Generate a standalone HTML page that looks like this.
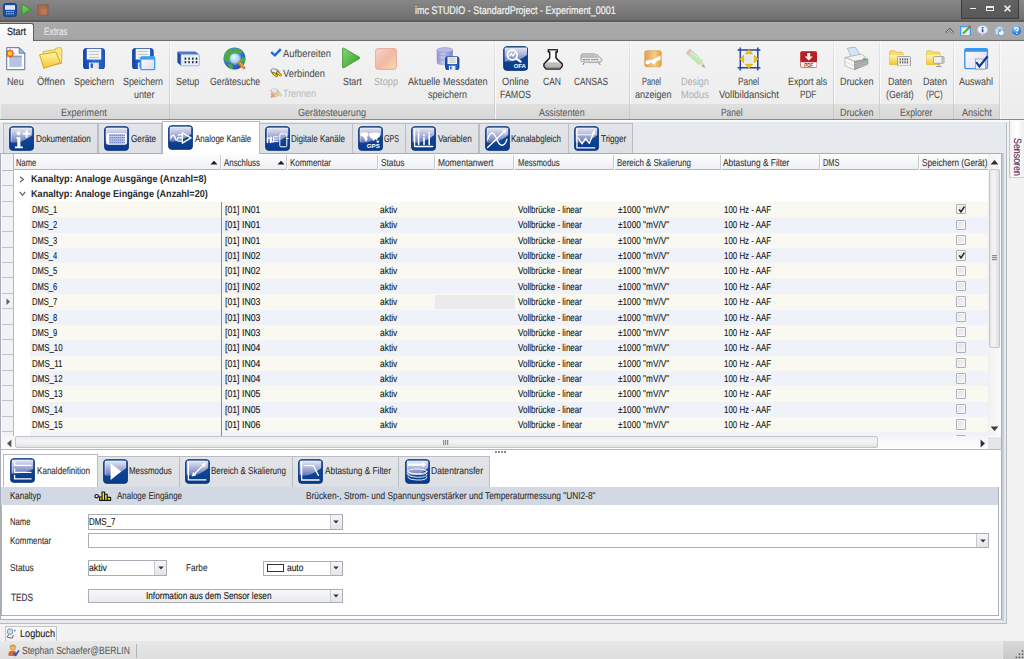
<!DOCTYPE html>
<html><head><meta charset="utf-8"><style>
*{margin:0;padding:0;box-sizing:border-box}
html,body{width:1024px;height:659px;overflow:hidden;background:#f2f2f2;font-family:"Liberation Sans",sans-serif;position:relative}
.a{position:absolute}
.t{position:absolute;white-space:nowrap;line-height:1;transform-origin:0 0}
</style></head><body>
<div class="a" style="left:0;top:0;width:1024px;height:20.3px;background:linear-gradient(#878787,#6f6f6f)"></div>
<div class="a" style="left:0;top:20.3px;width:1024px;height:1.3px;background:#5c5c5c"></div>
<svg class="a" style="left:3px;top:3px" width="14" height="14" viewBox="0 0 14 14"><rect x="0.5" y="0.5" width="13" height="13" rx="2" fill="#1a4ea6" stroke="#0d3a86" stroke-width="0.8"/><rect x="2" y="2.2" width="10" height="4.6" fill="#dde6f6"/><path d="M3 8.6H11M3 10.8H11" stroke="#c8d6f0" stroke-width="0.9" stroke-dasharray="1.2 0.5"/></svg><svg class="a" style="left:20.5px;top:3.3px" width="11.5" height="13" viewBox="0 0 11.5 13"><path d="M1.2 1.2L10.4 6.5L1.2 11.8Z" fill="url(#green)" stroke="#2f8a26" stroke-width="0.8"/></svg><svg class="a" style="left:36.5px;top:3.5px" width="12" height="12.5" viewBox="0 0 12 12.5"><rect x="0.6" y="0.6" width="10.8" height="11" rx="1.2" fill="#9a5a48" stroke="#7e6a60" stroke-width="0.6"/><rect x="1.6" y="1.6" width="8.8" height="9" fill="#b4704e" opacity="0.8"/><rect x="4" y="5" width="6" height="5.6" fill="#b88a5a" opacity="0.5"/></svg>
<div class="t" style="left:414.70px;top:6.00px;font-size:11px;font-weight:normal;text-rendering:geometricPrecision;color:#f4f4f4;transform:scaleX(0.8150);-webkit-text-stroke:0.2px #f4f4f4">imc STUDIO - StandardProject - Experiment_0001</div>
<div class="a" style="left:961.2px;top:-1px;width:58px;height:19.5px;background:linear-gradient(#636363,#575757);border:1px solid #3b3b3b"></div><div class="a" style="left:970px;top:7.8px;width:6.2px;height:1.6px;background:#ececec"></div><div class="a" style="left:986px;top:5.7px;width:8.1px;height:5.6px;border:1px solid #ececec;border-top-width:2px"></div><svg class="a" style="left:1003.5px;top:5px" width="7" height="7" viewBox="0 0 7 7"><path d="M0.6 0.6L6.4 6.4M6.4 0.6L0.6 6.4" stroke="#ececec" stroke-width="1.5"/></svg>
<div class="a" style="left:0;top:21.6px;width:1024px;height:18.4px;background:linear-gradient(#b2b2b2 0,#a9a9a9 8%,#a7a7a7 90%,#a0a0a0)"></div>
<div class="a" style="left:0;top:39.8px;width:1024px;height:1.3px;background:#6c6c6c"></div>
<div class="a" style="left:-1px;top:23.4px;width:34.6px;height:19px;background:linear-gradient(#fdfdfd,#f3f3f3);border:1px solid #5e5e5e;border-bottom:none;border-radius:0 2.5px 0 0"></div>
<div class="t" style="left:6.90px;top:27.00px;font-size:10.5px;font-weight:normal;text-rendering:geometricPrecision;color:#1e1e1e;transform:scaleX(0.8518);-webkit-text-stroke:0.2px #1e1e1e">Start</div>
<div class="t" style="left:43.75px;top:27.00px;font-size:10.5px;font-weight:normal;text-rendering:geometricPrecision;color:#e4e6ea;transform:scaleX(0.7861);-webkit-text-stroke:0.2px #e4e6ea">Extras</div>
<svg class="a" style="left:944.5px;top:27.5px" width="9.5" height="6" viewBox="0 0 9.5 6"><path d="M1 5L4.75 1.2L8.5 5" stroke="#595959" stroke-width="2.2" fill="none"/><path d="M1.3 5L4.75 1.6L8.2 5" stroke="#f6f2dc" stroke-width="0.9" fill="none"/></svg><svg class="a" style="left:960px;top:24.8px" width="11.5" height="11.5" viewBox="0 0 11.5 11.5"><rect x="0.7" y="1.7" width="9.6" height="9.2" fill="#efeaf8" stroke="#3a98f0" stroke-width="1.2"/><path d="M3 8.8L9.4 2.2" stroke="#46b83a" stroke-width="2.2"/><path d="M8.6 2.8L10.4 1" stroke="#e04a3a" stroke-width="2.2"/></svg><svg class="a" style="left:977px;top:25.2px" width="11" height="11" viewBox="0 0 11 11"><path d="M5.5 0.8Q10.5 0.8 10.5 4.8Q10.5 8.4 6.2 8.6L5 10.6L4.6 8.5Q0.6 8 0.6 4.8Q0.6 0.8 5.5 0.8Z" fill="#eeeefc" stroke="#c4c4e8" stroke-width="0.6"/><circle cx="5.6" cy="2.8" r="0.9" fill="#1a4fb0"/><path d="M5.6 4.2V7.2" stroke="#1a4fb0" stroke-width="1.6"/></svg><svg class="a" style="left:994px;top:25px" width="11" height="11" viewBox="0 0 11 11"><path d="M1 3L5 1L9.5 2.5V9L5.5 10.5L1 9Z" fill="#c4dcf4" stroke="#7aa6d6" stroke-width="0.6"/><path d="M1 3L5.5 4.6L9.5 2.5M5.5 4.6V10.5" stroke="#7aa6d6" stroke-width="0.5" fill="none"/><circle cx="7.3" cy="7.8" r="3" fill="#f4f6fa" stroke="#3c7cd0" stroke-width="0.7"/><path d="M5 6.5Q6 5.5 7 6.3" stroke="#e05a2a" stroke-width="0.9" fill="none"/></svg><svg class="a" style="left:1011px;top:25px" width="11" height="11" viewBox="0 0 11 11"><circle cx="5.5" cy="5.5" r="5" fill="url(#help)" stroke="#c8c8c8" stroke-width="0.5"/><path d="M3.8 4.2Q3.8 2.5 5.6 2.5Q7.3 2.5 7.3 4Q7.3 5 6 5.6V6.6" stroke="#fff" stroke-width="1.1" fill="none"/><circle cx="5.9" cy="8.2" r="0.7" fill="#fff"/></svg>
<div class="a" style="left:0;top:41.1px;width:1024px;height:77.8px;background:linear-gradient(#f3f3f3,#ececec)"></div>
<div class="a" style="left:1px;top:103.8px;width:168px;height:14.9px;background:linear-gradient(#e0e0e0,#d7d7d7)"></div>
<div class="t" style="left:60.60px;top:108.00px;font-size:10.5px;font-weight:normal;text-rendering:geometricPrecision;color:#5a5a5a;transform:scaleX(0.8605);-webkit-text-stroke:0.05px #5a5a5a">Experiment</div>
<div class="a" style="left:168.5px;top:42px;width:1px;height:77px;background:linear-gradient(#e6e6e6,#c8c8c8)"></div>
<div class="a" style="left:169.5px;top:42px;width:1px;height:77px;background:#f9f9f9"></div>
<div class="a" style="left:170px;top:103.8px;width:324.5px;height:14.9px;background:linear-gradient(#e0e0e0,#d7d7d7)"></div>
<div class="t" style="left:298.00px;top:108.00px;font-size:10.5px;font-weight:normal;text-rendering:geometricPrecision;color:#5a5a5a;transform:scaleX(0.8628);-webkit-text-stroke:0.05px #5a5a5a">Gerätesteuerung</div>
<div class="a" style="left:494.0px;top:42px;width:1px;height:77px;background:linear-gradient(#e6e6e6,#c8c8c8)"></div>
<div class="a" style="left:495.0px;top:42px;width:1px;height:77px;background:#f9f9f9"></div>
<div class="a" style="left:495.5px;top:103.8px;width:133.5px;height:14.9px;background:linear-gradient(#e0e0e0,#d7d7d7)"></div>
<div class="t" style="left:538.90px;top:108.00px;font-size:10.5px;font-weight:normal;text-rendering:geometricPrecision;color:#5a5a5a;transform:scaleX(0.8419);-webkit-text-stroke:0.05px #5a5a5a">Assistenten</div>
<div class="a" style="left:628.5px;top:42px;width:1px;height:77px;background:linear-gradient(#e6e6e6,#c8c8c8)"></div>
<div class="a" style="left:629.5px;top:42px;width:1px;height:77px;background:#f9f9f9"></div>
<div class="a" style="left:630px;top:103.8px;width:203.29999999999995px;height:14.9px;background:linear-gradient(#e0e0e0,#d7d7d7)"></div>
<div class="t" style="left:720.60px;top:108.00px;font-size:10.5px;font-weight:normal;text-rendering:geometricPrecision;color:#5a5a5a;transform:scaleX(0.8005);-webkit-text-stroke:0.05px #5a5a5a">Panel</div>
<div class="a" style="left:832.8px;top:42px;width:1px;height:77px;background:linear-gradient(#e6e6e6,#c8c8c8)"></div>
<div class="a" style="left:833.8px;top:42px;width:1px;height:77px;background:#f9f9f9"></div>
<div class="a" style="left:834.3px;top:103.8px;width:45.10000000000002px;height:14.9px;background:linear-gradient(#e0e0e0,#d7d7d7)"></div>
<div class="t" style="left:840.20px;top:108.00px;font-size:10.5px;font-weight:normal;text-rendering:geometricPrecision;color:#5a5a5a;transform:scaleX(0.8540);-webkit-text-stroke:0.05px #5a5a5a">Drucken</div>
<div class="a" style="left:878.9px;top:42px;width:1px;height:77px;background:linear-gradient(#e6e6e6,#c8c8c8)"></div>
<div class="a" style="left:879.9px;top:42px;width:1px;height:77px;background:#f9f9f9"></div>
<div class="a" style="left:880.4px;top:103.8px;width:72.89999999999998px;height:14.9px;background:linear-gradient(#e0e0e0,#d7d7d7)"></div>
<div class="t" style="left:900.40px;top:108.00px;font-size:10.5px;font-weight:normal;text-rendering:geometricPrecision;color:#5a5a5a;transform:scaleX(0.8310);-webkit-text-stroke:0.05px #5a5a5a">Explorer</div>
<div class="a" style="left:952.8px;top:42px;width:1px;height:77px;background:linear-gradient(#e6e6e6,#c8c8c8)"></div>
<div class="a" style="left:953.8px;top:42px;width:1px;height:77px;background:#f9f9f9"></div>
<div class="a" style="left:954.3px;top:103.8px;width:44.700000000000045px;height:14.9px;background:linear-gradient(#e0e0e0,#d7d7d7)"></div>
<div class="t" style="left:962.00px;top:108.00px;font-size:10.5px;font-weight:normal;text-rendering:geometricPrecision;color:#5a5a5a;transform:scaleX(0.8624);-webkit-text-stroke:0.05px #5a5a5a">Ansicht</div>
<div class="a" style="left:998.5px;top:42px;width:1px;height:77px;background:linear-gradient(#e6e6e6,#c8c8c8)"></div>
<div class="a" style="left:999.5px;top:42px;width:1px;height:77px;background:#f9f9f9"></div>
<div class="a" style="left:0;top:118.7px;width:1024px;height:1.4px;background:#8a8a8a"></div>
<div class="a" style="left:0;top:120.1px;width:1024px;height:2.2px;background:#fafafa"></div>
<div class="t" style="left:7.00px;top:77.00px;font-size:10.5px;font-weight:normal;text-rendering:geometricPrecision;color:#4b4b4b;transform:scaleX(0.8668);-webkit-text-stroke:0.05px #4b4b4b">Neu</div>
<div class="t" style="left:37.00px;top:77.00px;font-size:10.5px;font-weight:normal;text-rendering:geometricPrecision;color:#4b4b4b;transform:scaleX(0.8933);-webkit-text-stroke:0.05px #4b4b4b">Öffnen</div>
<div class="t" style="left:73.80px;top:77.00px;font-size:10.5px;font-weight:normal;text-rendering:geometricPrecision;color:#4b4b4b;transform:scaleX(0.8502);-webkit-text-stroke:0.05px #4b4b4b">Speichern</div>
<div class="t" style="left:123.00px;top:77.00px;font-size:10.5px;font-weight:normal;text-rendering:geometricPrecision;color:#4b4b4b;transform:scaleX(0.8460);-webkit-text-stroke:0.05px #4b4b4b">Speichern</div>
<div class="t" style="left:133.50px;top:90.00px;font-size:10.5px;font-weight:normal;text-rendering:geometricPrecision;color:#4b4b4b;transform:scaleX(0.8564);-webkit-text-stroke:0.05px #4b4b4b">unter</div>
<div class="t" style="left:176.00px;top:77.00px;font-size:10.5px;font-weight:normal;text-rendering:geometricPrecision;color:#4b4b4b;transform:scaleX(0.8487);-webkit-text-stroke:0.05px #4b4b4b">Setup</div>
<div class="t" style="left:209.80px;top:77.00px;font-size:10.5px;font-weight:normal;text-rendering:geometricPrecision;color:#4b4b4b;transform:scaleX(0.8349);-webkit-text-stroke:0.05px #4b4b4b">Gerätesuche</div>
<div class="t" style="left:343.00px;top:77.00px;font-size:10.5px;font-weight:normal;text-rendering:geometricPrecision;color:#4b4b4b;transform:scaleX(0.8428);-webkit-text-stroke:0.05px #4b4b4b">Start</div>
<div class="t" style="left:374.00px;top:77.00px;font-size:10.5px;font-weight:normal;text-rendering:geometricPrecision;color:#b0b0b0;transform:scaleX(0.8742);-webkit-text-stroke:0.05px #b0b0b0">Stopp</div>
<div class="t" style="left:408.00px;top:77.00px;font-size:10.5px;font-weight:normal;text-rendering:geometricPrecision;color:#4b4b4b;transform:scaleX(0.8686);-webkit-text-stroke:0.05px #4b4b4b">Aktuelle Messdaten</div>
<div class="t" style="left:428.00px;top:90.00px;font-size:10.5px;font-weight:normal;text-rendering:geometricPrecision;color:#4b4b4b;transform:scaleX(0.8566);-webkit-text-stroke:0.05px #4b4b4b">speichern</div>
<div class="t" style="left:502.00px;top:77.00px;font-size:10.5px;font-weight:normal;text-rendering:geometricPrecision;color:#4b4b4b;transform:scaleX(0.8893);-webkit-text-stroke:0.05px #4b4b4b">Online</div>
<div class="t" style="left:500.00px;top:90.00px;font-size:10.5px;font-weight:normal;text-rendering:geometricPrecision;color:#4b4b4b;transform:scaleX(0.8432);-webkit-text-stroke:0.05px #4b4b4b">FAMOS</div>
<div class="t" style="left:543.00px;top:77.00px;font-size:10.5px;font-weight:normal;text-rendering:geometricPrecision;color:#4b4b4b;transform:scaleX(0.8118);-webkit-text-stroke:0.05px #4b4b4b">CAN</div>
<div class="t" style="left:574.00px;top:77.00px;font-size:10.5px;font-weight:normal;text-rendering:geometricPrecision;color:#4b4b4b;transform:scaleX(0.7873);-webkit-text-stroke:0.05px #4b4b4b">CANSAS</div>
<div class="t" style="left:642.00px;top:77.00px;font-size:10.5px;font-weight:normal;text-rendering:geometricPrecision;color:#4b4b4b;transform:scaleX(0.7074);-webkit-text-stroke:0.05px #4b4b4b">Panel</div>
<div class="t" style="left:634.70px;top:90.00px;font-size:10.5px;font-weight:normal;text-rendering:geometricPrecision;color:#4b4b4b;transform:scaleX(0.8563);-webkit-text-stroke:0.05px #4b4b4b">anzeigen</div>
<div class="t" style="left:681.00px;top:77.00px;font-size:10.5px;font-weight:normal;text-rendering:geometricPrecision;color:#b0b0b0;transform:scaleX(0.8505);-webkit-text-stroke:0.05px #b0b0b0">Design</div>
<div class="t" style="left:681.00px;top:90.00px;font-size:10.5px;font-weight:normal;text-rendering:geometricPrecision;color:#b0b0b0;transform:scaleX(0.8821);-webkit-text-stroke:0.05px #b0b0b0">Modus</div>
<div class="t" style="left:737.80px;top:77.00px;font-size:10.5px;font-weight:normal;text-rendering:geometricPrecision;color:#4b4b4b;transform:scaleX(0.7893);-webkit-text-stroke:0.05px #4b4b4b">Panel</div>
<div class="t" style="left:718.50px;top:90.00px;font-size:10.5px;font-weight:normal;text-rendering:geometricPrecision;color:#4b4b4b;transform:scaleX(0.9016);-webkit-text-stroke:0.05px #4b4b4b">Vollbildansicht</div>
<div class="t" style="left:787.80px;top:77.00px;font-size:10.5px;font-weight:normal;text-rendering:geometricPrecision;color:#4b4b4b;transform:scaleX(0.8396);-webkit-text-stroke:0.05px #4b4b4b">Export als</div>
<div class="t" style="left:799.50px;top:90.00px;font-size:10.5px;font-weight:normal;text-rendering:geometricPrecision;color:#4b4b4b;transform:scaleX(0.7762);-webkit-text-stroke:0.05px #4b4b4b">PDF</div>
<div class="t" style="left:839.60px;top:77.00px;font-size:10.5px;font-weight:normal;text-rendering:geometricPrecision;color:#4b4b4b;transform:scaleX(0.8591);-webkit-text-stroke:0.05px #4b4b4b">Drucken</div>
<div class="t" style="left:887.60px;top:77.00px;font-size:10.5px;font-weight:normal;text-rendering:geometricPrecision;color:#4b4b4b;transform:scaleX(0.8562);-webkit-text-stroke:0.05px #4b4b4b">Daten</div>
<div class="t" style="left:885.60px;top:90.00px;font-size:10.5px;font-weight:normal;text-rendering:geometricPrecision;color:#4b4b4b;transform:scaleX(0.8357);-webkit-text-stroke:0.05px #4b4b4b">(Gerät)</div>
<div class="t" style="left:923.00px;top:77.00px;font-size:10.5px;font-weight:normal;text-rendering:geometricPrecision;color:#4b4b4b;transform:scaleX(0.8562);-webkit-text-stroke:0.05px #4b4b4b">Daten</div>
<div class="t" style="left:926.40px;top:90.00px;font-size:10.5px;font-weight:normal;text-rendering:geometricPrecision;color:#4b4b4b;transform:scaleX(0.7687);-webkit-text-stroke:0.05px #4b4b4b">(PC)</div>
<div class="t" style="left:959.00px;top:77.00px;font-size:10.5px;font-weight:normal;text-rendering:geometricPrecision;color:#4b4b4b;transform:scaleX(0.8564);-webkit-text-stroke:0.05px #4b4b4b">Auswahl</div>
<div class="t" style="left:283.00px;top:49.00px;font-size:10.5px;font-weight:normal;text-rendering:geometricPrecision;color:#4b4b4b;transform:scaleX(0.8935);-webkit-text-stroke:0.05px #4b4b4b">Aufbereiten</div>
<div class="t" style="left:283.00px;top:69.00px;font-size:10.5px;font-weight:normal;text-rendering:geometricPrecision;color:#4b4b4b;transform:scaleX(0.8880);-webkit-text-stroke:0.05px #4b4b4b">Verbinden</div>
<div class="t" style="left:283.00px;top:89.00px;font-size:10.5px;font-weight:normal;text-rendering:geometricPrecision;color:#b6b9be;transform:scaleX(0.8523);-webkit-text-stroke:0.05px #b6b9be">Trennen</div>
<svg class="a" style="left:6px;top:46.5px" width="20" height="24" viewBox="0 0 20 24"><path d="M0.7 0.7H13.2L18.8 6.3V22.7H0.7Z" fill="#fdfdff" stroke="#5b6f9c" stroke-width="1"/><path d="M13.2 0.7V6.3H18.8Z" fill="#8ec6e8" stroke="#5b6f9c" stroke-width="0.8"/><rect x="3.2" y="8.7" width="12.6" height="11.3" fill="#b6c3e2"/><rect x="3.2" y="8.7" width="12.6" height="1.6" fill="#8e9fcf"/><path d="M8.70 6.50L7.24 7.80L7.35 9.75L5.40 9.64L4.10 11.10L2.80 9.64L0.85 9.75L0.96 7.80L-0.50 6.50L0.96 5.20L0.85 3.25L2.80 3.36L4.10 1.90L5.40 3.36L7.35 3.25L7.24 5.20Z" fill="#f0502a" opacity="0.92"/><circle cx="4.1" cy="6.5" r="2.3" fill="#ffd21a"/></svg><svg class="a" style="left:39px;top:47px" width="24" height="22" viewBox="0 0 24 22"><path d="M4.2 4.6L16.2 2.6L16.6 1.2L21.8 0.6L23 2.5L22.6 16.5L4.6 19.8Z" fill="#fce788" stroke="#d1a82c" stroke-width="0.8"/><path d="M0.6 7.8L16.8 5L21.5 15.8L4.8 21.3Z" fill="url(#folder)" stroke="#cf9f1e" stroke-width="0.9"/></svg><svg class="a" style="left:83px;top:47.5px" width="22" height="21.5" viewBox="0 0 22 21.5"><rect x="0.5" y="0.5" width="21" height="20.5" rx="2.5" fill="url(#floppy)" stroke="#0f3e98" stroke-width="0.8"/><rect x="3.74" y="0.8" width="14.520000000000001" height="10.75" fill="#f4f4f4"/><path d="M5.94 3.44H16.06M5.94 6.45H16.06M5.94 9.46H16.06" stroke="#bdbdbd" stroke-width="0.9"/><rect x="5.94" y="14.620000000000001" width="9.9" height="6.45" fill="#e6e6e6"/><rect x="7.699999999999999" y="15.479999999999999" width="2.2" height="4.3" fill="#1c56c0"/></svg><svg class="a" style="left:132px;top:47.5px" width="21.7" height="21.5" viewBox="0 0 21.7 21.5"><rect x="0.5" y="0.5" width="20.7" height="20.5" rx="2.5" fill="url(#floppy)" stroke="#0f3e98" stroke-width="0.8"/><rect x="3.689" y="0.8" width="14.322000000000001" height="10.75" fill="#f4f4f4"/><path d="M5.859 3.44H15.841M5.859 6.45H15.841M5.859 9.46H15.841" stroke="#bdbdbd" stroke-width="0.9"/><rect x="5.859" y="14.620000000000001" width="9.765" height="6.45" fill="#e6e6e6"/><rect x="7.594999999999999" y="15.479999999999999" width="2.17" height="4.3" fill="#1c56c0"/></svg><svg class="a" style="left:140px;top:56px" width="15.5" height="14.5" viewBox="0 0 15.5 14.5"><rect x="0.8" y="0.8" width="13.9" height="12.9" rx="1" fill="url(#lav)" stroke="#3d9ef2" stroke-width="1.3"/><rect x="0.8" y="0.8" width="13.9" height="2.8" fill="#3d9ef2"/></svg><svg class="a" style="left:177px;top:51px" width="23" height="15.5" viewBox="0 0 23 15.5"><path d="M0.4 0.5H18.4L22.4 3.6H4Z" fill="#4f78c4"/><path d="M0.4 0.5L4 3.6V14.8L0.4 11.4Z" fill="#1c4aa2"/><rect x="4" y="3.6" width="18.4" height="11.2" rx="1" fill="#e9effa" stroke="#93acd8" stroke-width="0.8"/><rect x="7.6" y="6.4" width="1.6" height="2.4" rx="0.5" fill="#2a2a2a"/><rect x="7.6" y="9.9" width="1.6" height="2.4" rx="0.5" fill="#2a2a2a"/><rect x="11.3" y="6.4" width="1.6" height="2.4" rx="0.5" fill="#2a2a2a"/><rect x="11.3" y="9.9" width="1.6" height="2.4" rx="0.5" fill="#2a2a2a"/><rect x="15.0" y="6.4" width="1.6" height="2.4" rx="0.5" fill="#2a2a2a"/><rect x="15.0" y="9.9" width="1.6" height="2.4" rx="0.5" fill="#2a2a2a"/><rect x="18.700000000000003" y="6.4" width="1.6" height="2.4" rx="0.5" fill="#2a2a2a"/><rect x="18.700000000000003" y="9.9" width="1.6" height="2.4" rx="0.5" fill="#2a2a2a"/></svg><svg class="a" style="left:223px;top:47px" width="24" height="24" viewBox="0 0 24 24"><circle cx="11.5" cy="11.5" r="11" fill="url(#globe)"/><path d="M1.2 9Q3 3 8 1.5L11 2.5 13 1.2Q17 1.5 19.5 4L18.5 6.5 14.5 6 12 8.5 8 8.2 6 11 6.5 14 3.5 15.5 1.2 13Z M14.5 13L18 11.5 21.5 9.5 22.3 13.5 20.5 18 17.5 20.5 15.5 17Z M4.5 17.5L8 17 10 20 9.5 22.5Q6 21.5 4.5 17.5Z" fill="#48ad3e"/><circle cx="12" cy="11.6" r="5.6" fill="url(#lens)" stroke="#7f95a8" stroke-width="1.3"/><path d="M16 15.8L21 20.8" stroke="#e8702a" stroke-width="3" stroke-linecap="round"/><path d="M16.5 15.6L21.2 20.2" stroke="#ffc870" stroke-width="0.9"/></svg><svg class="a" style="left:269.5px;top:48px" width="12" height="9" viewBox="0 0 12 9"><path d="M1.2 4.2L4.9 7.3L10.8 1.2" stroke="#1a6ad8" stroke-width="2.4" fill="none" stroke-linejoin="miter"/></svg><svg class="a" style="left:269.8px;top:68.2px" width="12" height="9.5" viewBox="0 0 12 9.5"><ellipse cx="5" cy="3.6" rx="4.6" ry="3.1" fill="#8c8c8c" transform="rotate(20 5 3.6)"/><ellipse cx="4.6" cy="3" rx="3" ry="1.7" fill="#e8e8e8" transform="rotate(20 4.6 3)"/><path d="M3.6 5.4L6.4 7.8M7.4 4.6L10.4 7" stroke="#5a4a00" stroke-width="2.6" stroke-linecap="round"/><path d="M3.6 5.4L6.4 7.8M7.4 4.6L10.4 7" stroke="#f2c81a" stroke-width="1.7" stroke-linecap="round"/></svg><svg class="a" style="left:269.8px;top:88.2px" width="12" height="10.5" viewBox="0 0 12 10.5"><g opacity="0.38"><ellipse cx="5" cy="3.6" rx="4.6" ry="3.1" fill="#8c8c8c" transform="rotate(20 5 3.6)"/><ellipse cx="4.6" cy="3" rx="3" ry="1.7" fill="#e8e8e8" transform="rotate(20 4.6 3)"/><path d="M3.6 5.4L6.4 7.8M7.4 4.6L10.4 7" stroke="#5a4a00" stroke-width="2.6" stroke-linecap="round"/><path d="M3.6 5.4L6.4 7.8M7.4 4.6L10.4 7" stroke="#f2c81a" stroke-width="1.7" stroke-linecap="round"/></g><path d="M0.9 5.8L4.5 9.6M4.5 5.8L0.9 9.6" stroke="#f0907a" stroke-width="1.5"/></svg><svg class="a" style="left:341.4px;top:47.3px" width="20" height="22.5" viewBox="0 0 20 22.5"><path d="M1.6 1.8Q1.6 0.6 2.7 1.2L18.4 10.2Q19.4 10.9 18.4 11.6L2.7 20.8Q1.6 21.4 1.6 20.2Z" fill="url(#green)" stroke="#3a9a2a" stroke-width="0.9"/></svg><svg class="a" style="left:375.3px;top:47.5px" width="22" height="22" viewBox="0 0 22 22"><rect x="0.6" y="0.6" width="20.8" height="20.8" rx="2.4" fill="url(#pink)" stroke="#eaa494" stroke-width="0.9"/></svg><svg class="a" style="left:435.5px;top:46.8px" width="18" height="19" viewBox="0 0 18 19"><path d="M0.8 3V15.5Q0.8 18.2 8.8 18.2T16.8 15.5V3" fill="url(#db)"/><ellipse cx="8.8" cy="3" rx="8" ry="2.4" fill="#b9bce6" stroke="#8a8ec8" stroke-width="0.5"/><path d="M0.8 7.3Q8.8 10.5 16.8 7.3M0.8 11.5Q8.8 14.7 16.8 11.5" stroke="#9094cc" stroke-width="0.6" fill="none"/></svg><svg class="a" style="left:445px;top:55.6px" width="14.5" height="14.4" viewBox="0 0 14.5 14.4"><rect x="0.5" y="0.5" width="13.5" height="13.4" rx="2.5" fill="url(#floppy)" stroke="#0f3e98" stroke-width="0.8"/><rect x="2.4650000000000003" y="0.8" width="9.57" height="7.2" fill="#f4f4f4"/><path d="M3.915 2.3040000000000003H10.584999999999999M3.915 4.32H10.584999999999999M3.915 6.336H10.584999999999999" stroke="#bdbdbd" stroke-width="0.9"/><rect x="3.915" y="9.792000000000002" width="6.525" height="4.32" fill="#e6e6e6"/><rect x="5.074999999999999" y="10.368" width="1.4500000000000002" height="2.8800000000000003" fill="#1c56c0"/></svg><svg class="a" style="left:502.8px;top:46.2px" width="25.5" height="25" viewBox="0 0 25.5 25"><rect x="0.7" y="0.7" width="24" height="23.6" rx="3" fill="#0b3f8f" stroke="#0a3378" stroke-width="1"/><path d="M1.6 1.6H24V9Q15 16.5 1.6 15.5Z" fill="url(#gloss)"/><circle cx="9.3" cy="9" r="4.8" fill="none" stroke="#fff" stroke-width="1.8"/><path d="M13 12.3L17.6 15.6" stroke="#fff" stroke-width="2.2" stroke-linecap="round"/><path d="M6.6 10.4L8.2 7.6L10 10.2L11.9 6.9" stroke="#fff" stroke-width="1.2" fill="none"/><path d="M2 15L6 12" stroke="#fff" stroke-width="0.6" opacity="0.6"/><text x="22.6" y="22.4" text-anchor="end" font-family="Liberation Sans" font-weight="bold" font-size="6" fill="#fff" letter-spacing="-0.2">OFA</text></svg><svg class="a" style="left:542.5px;top:48.6px" width="20.5" height="21" viewBox="0 0 20.5 21"><path d="M5.3 0.7H14.4V2.9H13V9L19.2 15V17.3L16.9 20H3L1 17.3V15L6.7 9V2.9H5.3Z" fill="#fbfbfb" stroke="#222" stroke-width="1.1" stroke-linejoin="round"/><path d="M5.3 13.2H14.7L18.6 15.2V17.1L16.6 19.4H3.3L1.6 17.1V15.2Z" fill="#bdbdbd"/><path d="M2.2 18.3H17.8" stroke="#8a8a8a" stroke-width="1"/><path d="M5.3 0.7H14.4V2.9H13V9L19.2 15V17.3L16.9 20H3L1 17.3V15L6.7 9V2.9H5.3Z" fill="none" stroke="#222" stroke-width="1.1" stroke-linejoin="round"/></svg><svg class="a" style="left:580px;top:52.5px" width="23" height="13" viewBox="0 0 23 13"><path d="M0.8 3Q0.8 0.8 3 0.7H14Q18 0.8 22 6.2Q22.6 8 20.6 9.2Q11 10.6 1.6 8.6Q0.6 8 0.8 6Z" fill="#d2d2d2" stroke="#8c8c8c" stroke-width="0.6"/><path d="M1.6 2.2H14.5M1.4 3.6H17M1.2 5H19" stroke="#a6a6a6" stroke-width="0.6"/><path d="M2.6 6.4H20.2" stroke="#f4f4f4" stroke-width="2.4"/><path d="M3 6.6H9.8M11.2 6.6H18.8" stroke="#6e6e6e" stroke-width="0.9" stroke-dasharray="2 0.5"/><path d="M4.3 9.6L2.8 11.9M18.3 9.6L20.3 11.9" stroke="#7a7a7a" stroke-width="1"/></svg><svg class="a" style="left:644.3px;top:50px" width="18" height="17.5" viewBox="0 0 18 17.5"><rect x="0.6" y="0.6" width="16.8" height="16.3" rx="2" fill="url(#orange)" stroke="#e0a868" stroke-width="0.6"/><path d="M1.65 11L5.9 9.7L7.6 10.1L9.7 8.9L16.5 5.5V10.1L12.7 11L10.1 14.4L7.2 12.7L3.35 14.4L1.65 13.5Z" fill="#fff"/></svg><svg class="a" style="left:684.5px;top:47.5px" width="22" height="22" viewBox="0 0 22 22"><path d="M1.2 5.1L4.8 0.9L17.5 12.4L13.9 16.6Z" fill="#c4e6b8" stroke="#a9d09c" stroke-width="0.6"/><path d="M3 3L17.5 12.4" stroke="#e2f4dc" stroke-width="1"/><path d="M1.2 5.1L4.8 0.9L6.8 2.7L3.2 6.9Z" fill="#f2b8b2"/><path d="M17.5 12.4L13.9 16.6L20.6 19.8Z" fill="#f0d8c4"/><path d="M18.4 16.2L20.6 19.8L16.8 18.4Z" fill="#a0a0a0"/></svg><svg class="a" style="left:736.5px;top:46.5px" width="24" height="24" viewBox="0 0 24 24"><path d="M3.3 0.6V23.4M20.8 0.6V23.4M0.6 3.1H23.4M0.6 20.8H23.4" stroke="#2344a8" stroke-width="1.5"/><rect x="7.9" y="7.9" width="8.3" height="8.3" fill="#e6e6ec" stroke="#f8f8ff" stroke-width="0.8"/><path d="M12 2.6L15.9 6.9H8.1Z M12 21.4L15.9 17.1H8.1Z M2.6 12L6.9 8.1V15.9Z M21.4 12L17.1 8.1V15.9Z" fill="#f2c41a" stroke="#c49a08" stroke-width="0.5" stroke-linejoin="round"/></svg><svg class="a" style="left:799.5px;top:50.5px" width="17.5" height="17" viewBox="0 0 17.5 17"><rect x="0.5" y="0.5" width="16.5" height="16" rx="1.5" fill="#fff" stroke="#c04040" stroke-width="0.7"/><rect x="0.5" y="0.5" width="16.5" height="10.8" rx="1.5" fill="#b71f23"/><path d="M7.3 2H10.2V5.6H12.8L8.75 9.6L4.7 5.6H7.3Z" fill="#fff"/><text x="8.75" y="15.6" text-anchor="middle" font-family="Liberation Sans" font-weight="bold" font-size="4.6" fill="#b71f23">PDF</text></svg><svg class="a" style="left:844px;top:46px" width="25" height="24.5" viewBox="0 0 25 24.5"><path d="M3.3 2.3Q7 1.2 11.5 1.3L15.9 8.6L7.2 11Q5.5 6 3.3 2.3Z" fill="#d4e6fa" stroke="#8a9aac" stroke-width="0.6"/><path d="M0.9 11.5L17.4 8.1L23.9 13L10.6 15.4Z" fill="#f2f2f2" stroke="#9a9a9a" stroke-width="0.6"/><path d="M0.9 11.5L10.6 15.4V23.7L0.9 19.8Z" fill="#fafafa" stroke="#9a9a9a" stroke-width="0.6"/><path d="M10.6 15.4L23.9 13V18.3L10.6 23.7Z" fill="#9c9c9c" stroke="#8a8a8a" stroke-width="0.6"/><path d="M11 17.6L23.6 14.9M11 19.6L23.6 16.8M11 21.6L23.6 18.5" stroke="#c8c8c8" stroke-width="0.7"/><path d="M1.2 16L10.4 19.6" stroke="#c4c4c4" stroke-width="0.6"/><ellipse cx="20.3" cy="12.9" rx="1.4" ry="0.9" fill="#32c030"/></svg><svg class="a" style="left:889px;top:50.2px" width="15" height="15.5" viewBox="0 0 15 15.5"><path d="M0.6 2.2Q0.6 0.8 2 0.8H5.6L7 2.2H12.6Q14 2.2 14 3.6V14.5H0.6Z" fill="#f9df6a" stroke="#d0a42a" stroke-width="0.6"/><path d="M0.6 5H14V14.6H0.6Z" fill="url(#folder)"/></svg><svg class="a" style="left:896.5px;top:55.8px" width="14" height="10.5" viewBox="0 0 14 10.5"><rect x="0.5" y="0.5" width="13" height="9.5" rx="0.8" fill="#ededf2" stroke="#9a9a9a" stroke-width="0.9"/><rect x="2.6" y="2.3" width="1.3" height="2.1" fill="#606060"/><rect x="2.6" y="5.3" width="1.3" height="2.1" fill="#606060"/><rect x="5.0" y="2.3" width="1.3" height="2.1" fill="#606060"/><rect x="5.0" y="5.3" width="1.3" height="2.1" fill="#606060"/><rect x="7.4" y="2.3" width="1.3" height="2.1" fill="#606060"/><rect x="7.4" y="5.3" width="1.3" height="2.1" fill="#606060"/><rect x="9.799999999999999" y="2.3" width="1.3" height="2.1" fill="#606060"/><rect x="9.799999999999999" y="5.3" width="1.3" height="2.1" fill="#606060"/></svg><svg class="a" style="left:926px;top:50.2px" width="15" height="15.5" viewBox="0 0 15 15.5"><path d="M0.6 2.2Q0.6 0.8 2 0.8H5.6L7 2.2H12.6Q14 2.2 14 3.6V14.5H0.6Z" fill="#f9df6a" stroke="#d0a42a" stroke-width="0.6"/><path d="M0.6 5H14V14.6H0.6Z" fill="url(#folder)"/></svg><svg class="a" style="left:933px;top:55.5px" width="11.5" height="11.5" viewBox="0 0 11.5 11.5"><rect x="0.5" y="0.5" width="10.5" height="6.8" rx="0.8" fill="#f0f0f0" stroke="#9a9a9a" stroke-width="0.8"/><rect x="8.5" y="0.9" width="2.2" height="6" fill="#b8b8b8"/><path d="M5.75 7.5V9.8M3.2 10.5H8.5" stroke="#9a9a9a" stroke-width="1.1"/></svg><svg class="a" style="left:964px;top:48px" width="24.5" height="22" viewBox="0 0 24.5 22"><rect x="0.8" y="0.8" width="22.6" height="19.8" rx="1.5" fill="url(#lav)" stroke="#3a96ee" stroke-width="1.4"/><rect x="0.8" y="0.8" width="22.6" height="3" fill="#3a96ee"/><rect x="11.5" y="11" width="10" height="10" fill="#f4f4f4" stroke="#999" stroke-width="0.8"/><path d="M12.2 14.2L15.4 18.4L23.6 8.2" stroke="#0a3e9c" stroke-width="2.2" fill="none"/></svg>
<div class="a" style="left:-1px;top:122.3px;width:1008px;height:502px;border:1px solid #b6bcc5;border-top:none;background:#e6e9ee"></div>
<div class="a" style="left:0px;top:152.8px;width:1002.4px;height:467.5px;border:1px solid #a7aeb8;background:#fff"></div>
<div class="a" style="left:1008.6px;top:120.7px;width:16px;height:57px;background:linear-gradient(90deg,#f3f3f3,#ffffff 45%,#ececec);border-left:1px solid #c2c2c2;border-bottom:1px solid #cfcfcf"></div>
<div class="t" style="left:1011.6px;top:137.6px;font-size:10.5px;color:#4c2456;writing-mode:vertical-rl;transform:scaleY(0.843);text-rendering:geometricPrecision;-webkit-text-stroke:0.1px #4c2456">Sensoren</div>
<div class="a" style="left:3.4px;top:123.4px;width:94.79999999999998px;height:30px;background:linear-gradient(#e3e5e8,#dcdfe3);border:1px solid #b9bec6;border-bottom:none"></div>
<div class="t" style="left:36.00px;top:135.00px;font-size:10px;font-weight:normal;text-rendering:geometricPrecision;color:#2e2e2e;transform:scaleX(0.8147);-webkit-text-stroke:0.1px #2e2e2e">Dokumentation</div>
<div class="a" style="left:97.6px;top:123.4px;width:64.69999999999999px;height:30px;background:linear-gradient(#e3e5e8,#dcdfe3);border:1px solid #b9bec6;border-bottom:none"></div>
<div class="t" style="left:130.50px;top:135.00px;font-size:10px;font-weight:normal;text-rendering:geometricPrecision;color:#2e2e2e;transform:scaleX(0.8176);-webkit-text-stroke:0.1px #2e2e2e">Geräte</div>
<div class="a" style="left:161.7px;top:121px;width:98.20000000000002px;height:33px;background:#fff;border:1px solid #b4b9c2;border-bottom:none"></div>
<div class="t" style="left:195.30px;top:135.00px;font-size:10px;font-weight:normal;text-rendering:geometricPrecision;color:#2e2e2e;transform:scaleX(0.7972);-webkit-text-stroke:0.1px #2e2e2e">Analoge Kanäle</div>
<div class="a" style="left:259.3px;top:123.4px;width:93.29999999999998px;height:30px;background:linear-gradient(#e3e5e8,#dcdfe3);border:1px solid #b9bec6;border-bottom:none"></div>
<div class="t" style="left:291.30px;top:135.00px;font-size:10px;font-weight:normal;text-rendering:geometricPrecision;color:#2e2e2e;transform:scaleX(0.8028);-webkit-text-stroke:0.1px #2e2e2e">Digitale Kanäle</div>
<div class="a" style="left:352px;top:123.4px;width:53.99999999999998px;height:30px;background:linear-gradient(#e3e5e8,#dcdfe3);border:1px solid #b9bec6;border-bottom:none"></div>
<div class="t" style="left:384.20px;top:135.00px;font-size:10px;font-weight:normal;text-rendering:geometricPrecision;color:#2e2e2e;transform:scaleX(0.7101);-webkit-text-stroke:0.1px #2e2e2e">GPS</div>
<div class="a" style="left:405.4px;top:123.4px;width:73.70000000000002px;height:30px;background:linear-gradient(#e3e5e8,#dcdfe3);border:1px solid #b9bec6;border-bottom:none"></div>
<div class="t" style="left:438.30px;top:135.00px;font-size:10px;font-weight:normal;text-rendering:geometricPrecision;color:#2e2e2e;transform:scaleX(0.8117);-webkit-text-stroke:0.1px #2e2e2e">Variablen</div>
<div class="a" style="left:478.5px;top:123.4px;width:90.1px;height:30px;background:linear-gradient(#e3e5e8,#dcdfe3);border:1px solid #b9bec6;border-bottom:none"></div>
<div class="t" style="left:511.00px;top:135.00px;font-size:10px;font-weight:normal;text-rendering:geometricPrecision;color:#2e2e2e;transform:scaleX(0.7958);-webkit-text-stroke:0.1px #2e2e2e">Kanalabgleich</div>
<div class="a" style="left:568px;top:123.4px;width:64.6px;height:30px;background:linear-gradient(#e3e5e8,#dcdfe3);border:1px solid #b9bec6;border-bottom:none"></div>
<div class="t" style="left:601.20px;top:135.00px;font-size:10px;font-weight:normal;text-rendering:geometricPrecision;color:#2e2e2e;transform:scaleX(0.8080);-webkit-text-stroke:0.1px #2e2e2e">Trigger</div>
<svg width="0" height="0" style="position:absolute"><defs>
<linearGradient id="gloss" x1="0" y1="0" x2="0" y2="1"><stop offset="0" stop-color="#e4e7f3"/><stop offset="0.55" stop-color="#a3acd6"/><stop offset="1" stop-color="#6673b6"/></linearGradient>
<linearGradient id="bluebg" x1="0" y1="0" x2="0" y2="1"><stop offset="0" stop-color="#1a4c9c"/><stop offset="1" stop-color="#073c8c"/></linearGradient>
<linearGradient id="green" x1="0" y1="0" x2="1" y2="1"><stop offset="0" stop-color="#8ad77a"/><stop offset="1" stop-color="#2f9e22"/></linearGradient>
<linearGradient id="pink" x1="0" y1="0" x2="1" y2="1"><stop offset="0" stop-color="#f7d8d2"/><stop offset="0.5" stop-color="#f3b8a6"/><stop offset="1" stop-color="#f6dcae"/></linearGradient>
<linearGradient id="floppy" x1="0" y1="0" x2="1" y2="0"><stop offset="0" stop-color="#1143a8"/><stop offset="0.5" stop-color="#2c6fd6"/><stop offset="1" stop-color="#1c57bd"/></linearGradient>
<linearGradient id="folder" x1="0" y1="0" x2="0" y2="1"><stop offset="0" stop-color="#fff6b0"/><stop offset="1" stop-color="#f2c62a"/></linearGradient>
<linearGradient id="orange" x1="0" y1="0" x2="1" y2="0"><stop offset="0" stop-color="#e49a5a"/><stop offset="0.6" stop-color="#efd27e"/><stop offset="1" stop-color="#e0a03c"/></linearGradient>
<linearGradient id="lav" x1="0" y1="0" x2="1" y2="1"><stop offset="0" stop-color="#ffffff"/><stop offset="1" stop-color="#dcd8f4"/></linearGradient>
<linearGradient id="db" x1="0" y1="0" x2="1" y2="0"><stop offset="0" stop-color="#8d92cc"/><stop offset="0.4" stop-color="#c3c6ec"/><stop offset="1" stop-color="#7d82c0"/></linearGradient>
<radialGradient id="globe" cx="0.4" cy="0.35" r="0.7"><stop offset="0" stop-color="#6fb2ff"/><stop offset="1" stop-color="#1548b8"/></radialGradient>
<radialGradient id="lens" cx="0.4" cy="0.35" r="0.7"><stop offset="0" stop-color="#e8f8ff"/><stop offset="1" stop-color="#7cc4ec"/></radialGradient>
<radialGradient id="help" cx="0.4" cy="0.3" r="0.75"><stop offset="0" stop-color="#b6d8ff"/><stop offset="0.6" stop-color="#3a86dc"/><stop offset="1" stop-color="#1f5cb4"/></radialGradient>
</defs></svg><svg class="a" style="left:9px;top:126px" width="25" height="25" viewBox="0 0 25 25"><rect x="0.7" y="0.7" width="23.6" height="23.6" rx="3.2" fill="url(#bluebg)" stroke="#0a3378" stroke-width="1.1"/><path d="M1.8 1.8H23.2V9Q14 17.5 1.8 16.6Z" fill="url(#gloss)"/><path d="M2.2 15.5V4.5Q2.2 2.2 4.5 2.2H20.5" stroke="#f4f5fb" stroke-width="0.7" fill="none" opacity="0.8"/><circle cx="9.6" cy="7.3" r="2" fill="#fff"/><path d="M7.3 11.2H11.4V20.6H13.8V22.3H5.9V20.6H8.3V12.8H7.3Z" fill="#fff"/><path d="M17.6 4V11.6M13.8 7.8H21.4" stroke="#fff" stroke-width="1.9"/></svg><svg class="a" style="left:103.9px;top:126.2px" width="25" height="25" viewBox="0 0 25 25"><rect x="0.7" y="0.7" width="23.6" height="23.6" rx="3.2" fill="url(#bluebg)" stroke="#0a3378" stroke-width="1.1"/><path d="M1.8 1.8H23.2V18H1.8Z" fill="url(#gloss)"/><path d="M2.2 15.5V4.5Q2.2 2.2 4.5 2.2H20.5" stroke="#f4f5fb" stroke-width="0.7" fill="none" opacity="0.8"/><rect x="2.2" y="6.9" width="20.6" height="11.8" rx="2" fill="#fbfbfe"/><rect x="5" y="8" width="15.5" height="10" fill="#c9d0ec"/><rect x="5.6" y="8.6" width="1.1" height="1.3" fill="#5066b4"/><rect x="5.6" y="11.0" width="1.1" height="1.3" fill="#5066b4"/><rect x="5.6" y="13.399999999999999" width="1.1" height="1.3" fill="#5066b4"/><rect x="5.6" y="15.799999999999999" width="1.1" height="1.3" fill="#5066b4"/><rect x="7.6" y="8.6" width="1.1" height="1.3" fill="#5066b4"/><rect x="7.6" y="11.0" width="1.1" height="1.3" fill="#5066b4"/><rect x="7.6" y="13.399999999999999" width="1.1" height="1.3" fill="#5066b4"/><rect x="7.6" y="15.799999999999999" width="1.1" height="1.3" fill="#5066b4"/><rect x="9.6" y="8.6" width="1.1" height="1.3" fill="#5066b4"/><rect x="9.6" y="11.0" width="1.1" height="1.3" fill="#5066b4"/><rect x="9.6" y="13.399999999999999" width="1.1" height="1.3" fill="#5066b4"/><rect x="9.6" y="15.799999999999999" width="1.1" height="1.3" fill="#5066b4"/><rect x="11.6" y="8.6" width="1.1" height="1.3" fill="#5066b4"/><rect x="11.6" y="11.0" width="1.1" height="1.3" fill="#5066b4"/><rect x="11.6" y="13.399999999999999" width="1.1" height="1.3" fill="#5066b4"/><rect x="11.6" y="15.799999999999999" width="1.1" height="1.3" fill="#5066b4"/><rect x="13.6" y="8.6" width="1.1" height="1.3" fill="#5066b4"/><rect x="13.6" y="11.0" width="1.1" height="1.3" fill="#5066b4"/><rect x="13.6" y="13.399999999999999" width="1.1" height="1.3" fill="#5066b4"/><rect x="13.6" y="15.799999999999999" width="1.1" height="1.3" fill="#5066b4"/><rect x="15.6" y="8.6" width="1.1" height="1.3" fill="#5066b4"/><rect x="15.6" y="11.0" width="1.1" height="1.3" fill="#5066b4"/><rect x="15.6" y="13.399999999999999" width="1.1" height="1.3" fill="#5066b4"/><rect x="15.6" y="15.799999999999999" width="1.1" height="1.3" fill="#5066b4"/><rect x="17.6" y="8.6" width="1.1" height="1.3" fill="#5066b4"/><rect x="17.6" y="11.0" width="1.1" height="1.3" fill="#5066b4"/><rect x="17.6" y="13.399999999999999" width="1.1" height="1.3" fill="#5066b4"/><rect x="17.6" y="15.799999999999999" width="1.1" height="1.3" fill="#5066b4"/><rect x="19.6" y="8.6" width="1.1" height="1.3" fill="#5066b4"/><rect x="19.6" y="11.0" width="1.1" height="1.3" fill="#5066b4"/><rect x="19.6" y="13.399999999999999" width="1.1" height="1.3" fill="#5066b4"/><rect x="19.6" y="15.799999999999999" width="1.1" height="1.3" fill="#5066b4"/></svg><svg class="a" style="left:168.4px;top:125.2px" width="25" height="25" viewBox="0 0 25 25"><rect x="0.7" y="0.7" width="23.6" height="23.6" rx="3.2" fill="url(#bluebg)" stroke="#0a3378" stroke-width="1.1"/><path d="M1.8 1.8H23.2V9Q14 17.5 1.8 16.6Z" fill="url(#gloss)"/><path d="M2.2 15.5V4.5Q2.2 2.2 4.5 2.2H20.5" stroke="#f4f5fb" stroke-width="0.7" fill="none" opacity="0.8"/><path d="M2.9 12.9Q4.3 9.3 5.8 10.6T7.6 14.2Q9 16.6 9.9 12.9" stroke="#fff" fill="none" stroke-linecap="round" stroke-linejoin="round" stroke-width="1.4"/><path d="M10 9.8H13.6M10 12.9H13.6M10 16.1H13.6" stroke="#fff" fill="none" stroke-linecap="round" stroke-linejoin="round" stroke-width="1.3"/><path d="M14.3 7.8L23 12.8L14.3 18.1Z" stroke="#fff" fill="none" stroke-linecap="round" stroke-linejoin="round" stroke-width="1.4"/></svg><svg class="a" style="left:264.7px;top:126px" width="25" height="25" viewBox="0 0 25 25"><rect x="0.7" y="0.7" width="23.6" height="23.6" rx="3.2" fill="url(#bluebg)" stroke="#0a3378" stroke-width="1.1"/><path d="M1.8 1.8H23.2V9Q14 17.5 1.8 16.6Z" fill="url(#gloss)"/><path d="M2.2 15.5V4.5Q2.2 2.2 4.5 2.2H20.5" stroke="#f4f5fb" stroke-width="0.7" fill="none" opacity="0.8"/><path d="M2.4 16.5V12.2H5.5V16.5M6.3 11.2V15.8H8.6V11.2" stroke="#fff" fill="none" stroke-linecap="round" stroke-linejoin="round" stroke-width="1.3"/><path d="M9.5 10.8H13M9.5 13.2H13M9.5 15.6H13" stroke="#fff" fill="none" stroke-linecap="round" stroke-linejoin="round" stroke-width="1"/><rect x="14.8" y="7.8" width="7" height="13" rx="1.2" stroke="#fff" fill="none" stroke-linecap="round" stroke-linejoin="round" stroke-width="1"/><path d="M21.8 12.5H23.2" stroke="#fff" fill="none" stroke-linecap="round" stroke-linejoin="round"/></svg><svg class="a" style="left:357.7px;top:126px" width="25" height="25" viewBox="0 0 25 25"><rect x="0.7" y="0.7" width="23.6" height="23.6" rx="3.2" fill="url(#bluebg)" stroke="#0a3378" stroke-width="1.1"/><path d="M1.8 1.8H23.2V9Q14 17.5 1.8 16.6Z" fill="url(#gloss)"/><path d="M2.2 15.5V4.5Q2.2 2.2 4.5 2.2H20.5" stroke="#f4f5fb" stroke-width="0.7" fill="none" opacity="0.8"/><path transform="translate(0 1.3)" d="M2.5 6Q5 4.6 9.2 5.3L10.8 7.4L9 9.6L9.6 11.6L8.2 14.8L6.7 12.2L5.4 9.6L2.5 8.4Z M11.2 6Q16 4.4 21.8 5.8L21.6 9.8L19.6 10.6L19.2 12.8L17 12L15.6 14L14.2 11.4L12.4 10.4L11.3 8.4Z M18.4 13.3L21.2 13.5L20.8 15.4L18.8 15.2Z" fill="#fff"/><text x="21.8" y="22.3" text-anchor="end" font-family="Liberation Sans" font-weight="bold" font-size="6.2" fill="#fff">GPS</text></svg><svg class="a" style="left:411.4px;top:126.1px" width="25" height="25" viewBox="0 0 25 25"><rect x="0.7" y="0.7" width="23.6" height="23.6" rx="3.2" fill="url(#bluebg)" stroke="#0a3378" stroke-width="1.1"/><path d="M1.8 1.8H23.2V9Q14 17.5 1.8 16.6Z" fill="url(#gloss)"/><path d="M2.2 15.5V4.5Q2.2 2.2 4.5 2.2H20.5" stroke="#f4f5fb" stroke-width="0.7" fill="none" opacity="0.8"/><path d="M3.6 3.3V20.5H21.8" stroke="#fff" fill="none" stroke-linecap="round" stroke-linejoin="round" stroke-width="1.3"/><path d="M7.6 7.2V18.5M13 11.6V18.5M18.2 9.4V18.5" stroke="#fff" fill="none" stroke-linecap="round" stroke-linejoin="round" stroke-width="1.6"/><path d="M7.6 4.4V5.2M13 8.8V9.6M18.2 6.6V7.4" stroke="#fff" fill="none" stroke-linecap="round" stroke-linejoin="round" stroke-width="1.6"/></svg><svg class="a" style="left:484.9px;top:126.1px" width="25" height="25" viewBox="0 0 25 25"><rect x="0.7" y="0.7" width="23.6" height="23.6" rx="3.2" fill="url(#bluebg)" stroke="#0a3378" stroke-width="1.1"/><path d="M1.8 1.8H23.2V9Q14 17.5 1.8 16.6Z" fill="url(#gloss)"/><path d="M2.2 15.5V4.5Q2.2 2.2 4.5 2.2H20.5" stroke="#f4f5fb" stroke-width="0.7" fill="none" opacity="0.8"/><path d="M2.7 13.4Q4.5 6.5 7.3 7.1Q9.5 7.6 11.7 12.9Q13.8 18.5 16.5 19.2Q20 19.8 21.9 13.4" stroke="#fff" fill="none" stroke-linecap="round" stroke-linejoin="round" stroke-width="1.35"/><path d="M2.6 21.5L19.6 5.2" stroke="#fff" fill="none" stroke-linecap="round" stroke-linejoin="round" stroke-width="1.35"/><path d="M16.8 4.6L21.2 3.6L20.2 8Z" fill="#fff"/></svg><svg class="a" style="left:574.4px;top:126.1px" width="25" height="25" viewBox="0 0 25 25"><rect x="0.7" y="0.7" width="23.6" height="23.6" rx="3.2" fill="url(#bluebg)" stroke="#0a3378" stroke-width="1.1"/><path d="M1.8 1.8H23.2V9Q14 17.5 1.8 16.6Z" fill="url(#gloss)"/><path d="M2.2 15.5V4.5Q2.2 2.2 4.5 2.2H20.5" stroke="#f4f5fb" stroke-width="0.7" fill="none" opacity="0.8"/><path d="M2.9 3.7V21.9H20.6" stroke="#fff" fill="none" stroke-linecap="round" stroke-linejoin="round" stroke-width="1.3"/><path d="M2.9 8.8H18.5" stroke="#fff" fill="none" stroke-linecap="round" stroke-linejoin="round" stroke-width="1" opacity="0.9"/><path d="M4.6 12.4L8 17.8L11.6 12.4L15.3 17.3L19.2 7.8" stroke="#fff" fill="none" stroke-linecap="round" stroke-linejoin="round" stroke-width="1.4"/><path d="M17.6 7.4L20.6 3.8L20.9 8.4Z" fill="#fff"/></svg>
<div class="a" style="left:0.5px;top:448.6px;width:1001.5px;height:1.1px;background:#b4bac3"></div>
<div class="a" style="left:1.5px;top:153.8px;width:12.5px;height:282.5px;background:#f1f2f5;border-right:1px solid #b2b7bf"></div>
<div class="a" style="left:14px;top:153.8px;width:975px;height:16.5px;background:linear-gradient(#fdfdfe,#eef0f4);border-bottom:1px solid #b0b6bf"></div>
<div class="a" style="left:1.5px;top:169.6px;width:12.5px;height:1px;background:#b6bac2"></div>
<div class="t" style="left:15.80px;top:159.00px;font-size:10px;font-weight:normal;text-rendering:geometricPrecision;color:#333;transform:scaleX(0.7569);-webkit-text-stroke:0.1px #333">Name</div>
<div class="a" style="left:220.3px;top:154.5px;width:1px;height:15.5px;background:#c6cad1"></div><div class="a" style="left:221.3px;top:154.5px;width:1px;height:15.5px;background:#fdfdfd"></div>
<div class="t" style="left:224.40px;top:159.00px;font-size:10px;font-weight:normal;text-rendering:geometricPrecision;color:#333;transform:scaleX(0.7877);-webkit-text-stroke:0.1px #333">Anschluss</div>
<div class="a" style="left:285.8px;top:154.5px;width:1px;height:15.5px;background:#c6cad1"></div><div class="a" style="left:286.8px;top:154.5px;width:1px;height:15.5px;background:#fdfdfd"></div>
<div class="t" style="left:289.70px;top:159.00px;font-size:10px;font-weight:normal;text-rendering:geometricPrecision;color:#333;transform:scaleX(0.7932);-webkit-text-stroke:0.1px #333">Kommentar</div>
<div class="a" style="left:376.8px;top:154.5px;width:1px;height:15.5px;background:#c6cad1"></div><div class="a" style="left:377.8px;top:154.5px;width:1px;height:15.5px;background:#fdfdfd"></div>
<div class="t" style="left:380.60px;top:159.00px;font-size:10px;font-weight:normal;text-rendering:geometricPrecision;color:#333;transform:scaleX(0.8251);-webkit-text-stroke:0.1px #333">Status</div>
<div class="a" style="left:433.8px;top:154.5px;width:1px;height:15.5px;background:#c6cad1"></div><div class="a" style="left:434.8px;top:154.5px;width:1px;height:15.5px;background:#fdfdfd"></div>
<div class="t" style="left:437.50px;top:159.00px;font-size:10px;font-weight:normal;text-rendering:geometricPrecision;color:#333;transform:scaleX(0.8361);-webkit-text-stroke:0.1px #333">Momentanwert</div>
<div class="a" style="left:513.3px;top:154.5px;width:1px;height:15.5px;background:#c6cad1"></div><div class="a" style="left:514.3px;top:154.5px;width:1px;height:15.5px;background:#fdfdfd"></div>
<div class="t" style="left:517.80px;top:159.00px;font-size:10px;font-weight:normal;text-rendering:geometricPrecision;color:#333;transform:scaleX(0.7717);-webkit-text-stroke:0.1px #333">Messmodus</div>
<div class="a" style="left:613.3px;top:154.5px;width:1px;height:15.5px;background:#c6cad1"></div><div class="a" style="left:614.3px;top:154.5px;width:1px;height:15.5px;background:#fdfdfd"></div>
<div class="t" style="left:616.90px;top:159.00px;font-size:10px;font-weight:normal;text-rendering:geometricPrecision;color:#333;transform:scaleX(0.7924);-webkit-text-stroke:0.1px #333">Bereich &amp; Skalierung</div>
<div class="a" style="left:719.5px;top:154.5px;width:1px;height:15.5px;background:#c6cad1"></div><div class="a" style="left:720.5px;top:154.5px;width:1px;height:15.5px;background:#fdfdfd"></div>
<div class="t" style="left:723.00px;top:159.00px;font-size:10px;font-weight:normal;text-rendering:geometricPrecision;color:#333;transform:scaleX(0.8354);-webkit-text-stroke:0.1px #333">Abtastung &amp; Filter</div>
<div class="a" style="left:819.0999999999999px;top:154.5px;width:1px;height:15.5px;background:#c6cad1"></div><div class="a" style="left:820.0999999999999px;top:154.5px;width:1px;height:15.5px;background:#fdfdfd"></div>
<div class="t" style="left:822.60px;top:159.00px;font-size:10px;font-weight:normal;text-rendering:geometricPrecision;color:#333;transform:scaleX(0.7376);-webkit-text-stroke:0.1px #333">DMS</div>
<div class="a" style="left:918.1999999999999px;top:154.5px;width:1px;height:15.5px;background:#c6cad1"></div><div class="a" style="left:919.1999999999999px;top:154.5px;width:1px;height:15.5px;background:#fdfdfd"></div>
<div class="t" style="left:921.80px;top:159.00px;font-size:10px;font-weight:normal;text-rendering:geometricPrecision;color:#333;transform:scaleX(0.8228);-webkit-text-stroke:0.1px #333">Speichern (Gerät)</div>
<svg class="a" style="left:209.5px;top:159.5px" width="8" height="5"><path d="M0.5 4.5L4 0.8L7.5 4.5Z" fill="#1e1e1e"/></svg>
<svg class="a" style="left:276.5px;top:159.5px" width="8" height="5"><path d="M0.5 4.5L4 0.8L7.5 4.5Z" fill="#1e1e1e"/></svg>
<svg class="a" style="left:19px;top:176px" width="6" height="7"><path d="M1 0.8L4.3 3.5L1 6.2" stroke="#666a70" stroke-width="1.3" fill="none"/></svg>
<div class="t" style="left:31.25px;top:175.00px;font-size:10px;font-weight:bold;text-rendering:geometricPrecision;color:#2a2a2a;transform:scaleX(0.9156)">Kanaltyp: Analoge Ausgänge (Anzahl=8)</div>
<svg class="a" style="left:19px;top:191.3px" width="7" height="6"><path d="M0.8 1L3.5 4.3L6.2 1" stroke="#666a70" stroke-width="1.3" fill="none"/></svg>
<div class="t" style="left:31.25px;top:190.00px;font-size:10px;font-weight:bold;text-rendering:geometricPrecision;color:#2a2a2a;transform:scaleX(0.9095)">Kanaltyp: Analoge Eingänge (Anzahl=20)</div>
<div class="a" style="left:1.5px;top:185.27px;width:12.5px;height:1px;background:#bfc3ca"></div>
<div class="a" style="left:1.5px;top:200.64px;width:12.5px;height:1px;background:#bfc3ca"></div>
<div class="a" style="left:1.5px;top:216.01px;width:12.5px;height:1px;background:#bfc3ca"></div>
<div class="a" style="left:1.5px;top:231.38px;width:12.5px;height:1px;background:#bfc3ca"></div>
<div class="a" style="left:1.5px;top:246.75px;width:12.5px;height:1px;background:#bfc3ca"></div>
<div class="a" style="left:1.5px;top:262.12px;width:12.5px;height:1px;background:#bfc3ca"></div>
<div class="a" style="left:1.5px;top:277.49px;width:12.5px;height:1px;background:#bfc3ca"></div>
<div class="a" style="left:1.5px;top:292.86px;width:12.5px;height:1px;background:#bfc3ca"></div>
<div class="a" style="left:1.5px;top:308.23px;width:12.5px;height:1px;background:#bfc3ca"></div>
<div class="a" style="left:1.5px;top:323.60px;width:12.5px;height:1px;background:#bfc3ca"></div>
<div class="a" style="left:1.5px;top:338.97px;width:12.5px;height:1px;background:#bfc3ca"></div>
<div class="a" style="left:1.5px;top:354.34px;width:12.5px;height:1px;background:#bfc3ca"></div>
<div class="a" style="left:1.5px;top:369.71px;width:12.5px;height:1px;background:#bfc3ca"></div>
<div class="a" style="left:1.5px;top:385.08px;width:12.5px;height:1px;background:#bfc3ca"></div>
<div class="a" style="left:1.5px;top:400.45px;width:12.5px;height:1px;background:#bfc3ca"></div>
<div class="a" style="left:1.5px;top:415.82px;width:12.5px;height:1px;background:#bfc3ca"></div>
<div class="a" style="left:1.5px;top:431.19px;width:12.5px;height:1px;background:#bfc3ca"></div>
<div class="a" style="left:30px;top:201.94px;width:958.5px;height:15.37px;background:#f9f9f1"></div>
<div class="t" style="left:31.90px;top:206.00px;font-size:10px;font-weight:normal;text-rendering:geometricPrecision;color:#111;transform:scaleX(0.7584);-webkit-text-stroke:0.1px #111">DMS_1</div>
<div class="t" style="left:224.60px;top:206.00px;font-size:10px;font-weight:normal;text-rendering:geometricPrecision;color:#111;transform:scaleX(0.8721);-webkit-text-stroke:0.1px #111">[01] IN01</div>
<div class="t" style="left:380.30px;top:206.00px;font-size:10px;font-weight:normal;text-rendering:geometricPrecision;color:#111;transform:scaleX(0.8413);-webkit-text-stroke:0.1px #111">aktiv</div>
<div class="t" style="left:517.70px;top:206.00px;font-size:10px;font-weight:normal;text-rendering:geometricPrecision;color:#111;transform:scaleX(0.8052);-webkit-text-stroke:0.1px #111">Vollbrücke - linear</div>
<div class="t" style="left:617.50px;top:206.00px;font-size:10px;font-weight:normal;text-rendering:geometricPrecision;color:#111;transform:scaleX(0.8234);-webkit-text-stroke:0.1px #111">±1000 "mV/V"</div>
<div class="t" style="left:724.00px;top:206.00px;font-size:10px;font-weight:normal;text-rendering:geometricPrecision;color:#111;transform:scaleX(0.7903);-webkit-text-stroke:0.1px #111">100 Hz - AAF</div>
<div class="a" style="left:30px;top:217.31px;width:958.5px;height:15.37px;background:#eff2f8"></div>
<div class="t" style="left:31.90px;top:221.00px;font-size:10px;font-weight:normal;text-rendering:geometricPrecision;color:#111;transform:scaleX(0.7584);-webkit-text-stroke:0.1px #111">DMS_2</div>
<div class="t" style="left:224.60px;top:221.00px;font-size:10px;font-weight:normal;text-rendering:geometricPrecision;color:#111;transform:scaleX(0.8721);-webkit-text-stroke:0.1px #111">[01] IN01</div>
<div class="t" style="left:380.30px;top:221.00px;font-size:10px;font-weight:normal;text-rendering:geometricPrecision;color:#111;transform:scaleX(0.8413);-webkit-text-stroke:0.1px #111">aktiv</div>
<div class="t" style="left:517.70px;top:221.00px;font-size:10px;font-weight:normal;text-rendering:geometricPrecision;color:#111;transform:scaleX(0.8052);-webkit-text-stroke:0.1px #111">Vollbrücke - linear</div>
<div class="t" style="left:617.50px;top:221.00px;font-size:10px;font-weight:normal;text-rendering:geometricPrecision;color:#111;transform:scaleX(0.8234);-webkit-text-stroke:0.1px #111">±1000 "mV/V"</div>
<div class="t" style="left:724.00px;top:221.00px;font-size:10px;font-weight:normal;text-rendering:geometricPrecision;color:#111;transform:scaleX(0.7903);-webkit-text-stroke:0.1px #111">100 Hz - AAF</div>
<div class="a" style="left:30px;top:232.68px;width:958.5px;height:15.37px;background:#f9f9f1"></div>
<div class="t" style="left:31.90px;top:237.00px;font-size:10px;font-weight:normal;text-rendering:geometricPrecision;color:#111;transform:scaleX(0.7584);-webkit-text-stroke:0.1px #111">DMS_3</div>
<div class="t" style="left:224.60px;top:237.00px;font-size:10px;font-weight:normal;text-rendering:geometricPrecision;color:#111;transform:scaleX(0.8721);-webkit-text-stroke:0.1px #111">[01] IN01</div>
<div class="t" style="left:380.30px;top:237.00px;font-size:10px;font-weight:normal;text-rendering:geometricPrecision;color:#111;transform:scaleX(0.8413);-webkit-text-stroke:0.1px #111">aktiv</div>
<div class="t" style="left:517.70px;top:237.00px;font-size:10px;font-weight:normal;text-rendering:geometricPrecision;color:#111;transform:scaleX(0.8052);-webkit-text-stroke:0.1px #111">Vollbrücke - linear</div>
<div class="t" style="left:617.50px;top:237.00px;font-size:10px;font-weight:normal;text-rendering:geometricPrecision;color:#111;transform:scaleX(0.8234);-webkit-text-stroke:0.1px #111">±1000 "mV/V"</div>
<div class="t" style="left:724.00px;top:237.00px;font-size:10px;font-weight:normal;text-rendering:geometricPrecision;color:#111;transform:scaleX(0.7903);-webkit-text-stroke:0.1px #111">100 Hz - AAF</div>
<div class="a" style="left:30px;top:248.05px;width:958.5px;height:15.37px;background:#eff2f8"></div>
<div class="t" style="left:31.90px;top:252.00px;font-size:10px;font-weight:normal;text-rendering:geometricPrecision;color:#111;transform:scaleX(0.7584);-webkit-text-stroke:0.1px #111">DMS_4</div>
<div class="t" style="left:224.60px;top:252.00px;font-size:10px;font-weight:normal;text-rendering:geometricPrecision;color:#111;transform:scaleX(0.8721);-webkit-text-stroke:0.1px #111">[01] IN02</div>
<div class="t" style="left:380.30px;top:252.00px;font-size:10px;font-weight:normal;text-rendering:geometricPrecision;color:#111;transform:scaleX(0.8413);-webkit-text-stroke:0.1px #111">aktiv</div>
<div class="t" style="left:517.70px;top:252.00px;font-size:10px;font-weight:normal;text-rendering:geometricPrecision;color:#111;transform:scaleX(0.8052);-webkit-text-stroke:0.1px #111">Vollbrücke - linear</div>
<div class="t" style="left:617.50px;top:252.00px;font-size:10px;font-weight:normal;text-rendering:geometricPrecision;color:#111;transform:scaleX(0.8234);-webkit-text-stroke:0.1px #111">±1000 "mV/V"</div>
<div class="t" style="left:724.00px;top:252.00px;font-size:10px;font-weight:normal;text-rendering:geometricPrecision;color:#111;transform:scaleX(0.7903);-webkit-text-stroke:0.1px #111">100 Hz - AAF</div>
<div class="a" style="left:30px;top:263.42px;width:958.5px;height:15.37px;background:#f9f9f1"></div>
<div class="t" style="left:31.90px;top:267.00px;font-size:10px;font-weight:normal;text-rendering:geometricPrecision;color:#111;transform:scaleX(0.7584);-webkit-text-stroke:0.1px #111">DMS_5</div>
<div class="t" style="left:224.60px;top:267.00px;font-size:10px;font-weight:normal;text-rendering:geometricPrecision;color:#111;transform:scaleX(0.8721);-webkit-text-stroke:0.1px #111">[01] IN02</div>
<div class="t" style="left:380.30px;top:267.00px;font-size:10px;font-weight:normal;text-rendering:geometricPrecision;color:#111;transform:scaleX(0.8413);-webkit-text-stroke:0.1px #111">aktiv</div>
<div class="t" style="left:517.70px;top:267.00px;font-size:10px;font-weight:normal;text-rendering:geometricPrecision;color:#111;transform:scaleX(0.8052);-webkit-text-stroke:0.1px #111">Vollbrücke - linear</div>
<div class="t" style="left:617.50px;top:267.00px;font-size:10px;font-weight:normal;text-rendering:geometricPrecision;color:#111;transform:scaleX(0.8234);-webkit-text-stroke:0.1px #111">±1000 "mV/V"</div>
<div class="t" style="left:724.00px;top:267.00px;font-size:10px;font-weight:normal;text-rendering:geometricPrecision;color:#111;transform:scaleX(0.7903);-webkit-text-stroke:0.1px #111">100 Hz - AAF</div>
<div class="a" style="left:30px;top:278.79px;width:958.5px;height:15.37px;background:#eff2f8"></div>
<div class="t" style="left:31.90px;top:283.00px;font-size:10px;font-weight:normal;text-rendering:geometricPrecision;color:#111;transform:scaleX(0.7584);-webkit-text-stroke:0.1px #111">DMS_6</div>
<div class="t" style="left:224.60px;top:283.00px;font-size:10px;font-weight:normal;text-rendering:geometricPrecision;color:#111;transform:scaleX(0.8721);-webkit-text-stroke:0.1px #111">[01] IN02</div>
<div class="t" style="left:380.30px;top:283.00px;font-size:10px;font-weight:normal;text-rendering:geometricPrecision;color:#111;transform:scaleX(0.8413);-webkit-text-stroke:0.1px #111">aktiv</div>
<div class="t" style="left:517.70px;top:283.00px;font-size:10px;font-weight:normal;text-rendering:geometricPrecision;color:#111;transform:scaleX(0.8052);-webkit-text-stroke:0.1px #111">Vollbrücke - linear</div>
<div class="t" style="left:617.50px;top:283.00px;font-size:10px;font-weight:normal;text-rendering:geometricPrecision;color:#111;transform:scaleX(0.8234);-webkit-text-stroke:0.1px #111">±1000 "mV/V"</div>
<div class="t" style="left:724.00px;top:283.00px;font-size:10px;font-weight:normal;text-rendering:geometricPrecision;color:#111;transform:scaleX(0.7903);-webkit-text-stroke:0.1px #111">100 Hz - AAF</div>
<div class="a" style="left:30px;top:294.16px;width:958.5px;height:15.37px;background:#f9f9f1"></div>
<div class="a" style="left:435.2px;top:294.76px;width:80.3px;height:14.47px;background:#ebebed"></div>
<svg class="a" style="left:5.5px;top:298.46px" width="5" height="8"><path d="M0.5 0.5L4 3.8L0.5 7.1Z" fill="#5a5e66"/></svg>
<div class="t" style="left:31.90px;top:298.00px;font-size:10px;font-weight:normal;text-rendering:geometricPrecision;color:#111;transform:scaleX(0.7584);-webkit-text-stroke:0.1px #111">DMS_7</div>
<div class="t" style="left:224.60px;top:298.00px;font-size:10px;font-weight:normal;text-rendering:geometricPrecision;color:#111;transform:scaleX(0.8721);-webkit-text-stroke:0.1px #111">[01] IN03</div>
<div class="t" style="left:380.30px;top:298.00px;font-size:10px;font-weight:normal;text-rendering:geometricPrecision;color:#111;transform:scaleX(0.8413);-webkit-text-stroke:0.1px #111">aktiv</div>
<div class="t" style="left:517.70px;top:298.00px;font-size:10px;font-weight:normal;text-rendering:geometricPrecision;color:#111;transform:scaleX(0.8052);-webkit-text-stroke:0.1px #111">Vollbrücke - linear</div>
<div class="t" style="left:617.50px;top:298.00px;font-size:10px;font-weight:normal;text-rendering:geometricPrecision;color:#111;transform:scaleX(0.8234);-webkit-text-stroke:0.1px #111">±1000 "mV/V"</div>
<div class="t" style="left:724.00px;top:298.00px;font-size:10px;font-weight:normal;text-rendering:geometricPrecision;color:#111;transform:scaleX(0.7903);-webkit-text-stroke:0.1px #111">100 Hz - AAF</div>
<div class="a" style="left:30px;top:309.53px;width:958.5px;height:15.37px;background:#eff2f8"></div>
<div class="t" style="left:31.90px;top:314.00px;font-size:10px;font-weight:normal;text-rendering:geometricPrecision;color:#111;transform:scaleX(0.7584);-webkit-text-stroke:0.1px #111">DMS_8</div>
<div class="t" style="left:224.60px;top:314.00px;font-size:10px;font-weight:normal;text-rendering:geometricPrecision;color:#111;transform:scaleX(0.8721);-webkit-text-stroke:0.1px #111">[01] IN03</div>
<div class="t" style="left:380.30px;top:314.00px;font-size:10px;font-weight:normal;text-rendering:geometricPrecision;color:#111;transform:scaleX(0.8413);-webkit-text-stroke:0.1px #111">aktiv</div>
<div class="t" style="left:517.70px;top:314.00px;font-size:10px;font-weight:normal;text-rendering:geometricPrecision;color:#111;transform:scaleX(0.8052);-webkit-text-stroke:0.1px #111">Vollbrücke - linear</div>
<div class="t" style="left:617.50px;top:314.00px;font-size:10px;font-weight:normal;text-rendering:geometricPrecision;color:#111;transform:scaleX(0.8234);-webkit-text-stroke:0.1px #111">±1000 "mV/V"</div>
<div class="t" style="left:724.00px;top:314.00px;font-size:10px;font-weight:normal;text-rendering:geometricPrecision;color:#111;transform:scaleX(0.7903);-webkit-text-stroke:0.1px #111">100 Hz - AAF</div>
<div class="a" style="left:30px;top:324.90px;width:958.5px;height:15.37px;background:#f9f9f1"></div>
<div class="t" style="left:31.90px;top:329.00px;font-size:10px;font-weight:normal;text-rendering:geometricPrecision;color:#111;transform:scaleX(0.7584);-webkit-text-stroke:0.1px #111">DMS_9</div>
<div class="t" style="left:224.60px;top:329.00px;font-size:10px;font-weight:normal;text-rendering:geometricPrecision;color:#111;transform:scaleX(0.8721);-webkit-text-stroke:0.1px #111">[01] IN03</div>
<div class="t" style="left:380.30px;top:329.00px;font-size:10px;font-weight:normal;text-rendering:geometricPrecision;color:#111;transform:scaleX(0.8413);-webkit-text-stroke:0.1px #111">aktiv</div>
<div class="t" style="left:517.70px;top:329.00px;font-size:10px;font-weight:normal;text-rendering:geometricPrecision;color:#111;transform:scaleX(0.8052);-webkit-text-stroke:0.1px #111">Vollbrücke - linear</div>
<div class="t" style="left:617.50px;top:329.00px;font-size:10px;font-weight:normal;text-rendering:geometricPrecision;color:#111;transform:scaleX(0.8234);-webkit-text-stroke:0.1px #111">±1000 "mV/V"</div>
<div class="t" style="left:724.00px;top:329.00px;font-size:10px;font-weight:normal;text-rendering:geometricPrecision;color:#111;transform:scaleX(0.7903);-webkit-text-stroke:0.1px #111">100 Hz - AAF</div>
<div class="a" style="left:30px;top:340.27px;width:958.5px;height:15.37px;background:#eff2f8"></div>
<div class="t" style="left:31.90px;top:344.00px;font-size:10px;font-weight:normal;text-rendering:geometricPrecision;color:#111;transform:scaleX(0.7839);-webkit-text-stroke:0.1px #111">DMS_10</div>
<div class="t" style="left:224.60px;top:344.00px;font-size:10px;font-weight:normal;text-rendering:geometricPrecision;color:#111;transform:scaleX(0.8721);-webkit-text-stroke:0.1px #111">[01] IN04</div>
<div class="t" style="left:380.30px;top:344.00px;font-size:10px;font-weight:normal;text-rendering:geometricPrecision;color:#111;transform:scaleX(0.8413);-webkit-text-stroke:0.1px #111">aktiv</div>
<div class="t" style="left:517.70px;top:344.00px;font-size:10px;font-weight:normal;text-rendering:geometricPrecision;color:#111;transform:scaleX(0.8052);-webkit-text-stroke:0.1px #111">Vollbrücke - linear</div>
<div class="t" style="left:617.50px;top:344.00px;font-size:10px;font-weight:normal;text-rendering:geometricPrecision;color:#111;transform:scaleX(0.8234);-webkit-text-stroke:0.1px #111">±1000 "mV/V"</div>
<div class="t" style="left:724.00px;top:344.00px;font-size:10px;font-weight:normal;text-rendering:geometricPrecision;color:#111;transform:scaleX(0.7903);-webkit-text-stroke:0.1px #111">100 Hz - AAF</div>
<div class="a" style="left:30px;top:355.64px;width:958.5px;height:15.37px;background:#f9f9f1"></div>
<div class="t" style="left:31.90px;top:360.00px;font-size:10px;font-weight:normal;text-rendering:geometricPrecision;color:#111;transform:scaleX(0.7990);-webkit-text-stroke:0.1px #111">DMS_11</div>
<div class="t" style="left:224.60px;top:360.00px;font-size:10px;font-weight:normal;text-rendering:geometricPrecision;color:#111;transform:scaleX(0.8721);-webkit-text-stroke:0.1px #111">[01] IN04</div>
<div class="t" style="left:380.30px;top:360.00px;font-size:10px;font-weight:normal;text-rendering:geometricPrecision;color:#111;transform:scaleX(0.8413);-webkit-text-stroke:0.1px #111">aktiv</div>
<div class="t" style="left:517.70px;top:360.00px;font-size:10px;font-weight:normal;text-rendering:geometricPrecision;color:#111;transform:scaleX(0.8052);-webkit-text-stroke:0.1px #111">Vollbrücke - linear</div>
<div class="t" style="left:617.50px;top:360.00px;font-size:10px;font-weight:normal;text-rendering:geometricPrecision;color:#111;transform:scaleX(0.8234);-webkit-text-stroke:0.1px #111">±1000 "mV/V"</div>
<div class="t" style="left:724.00px;top:360.00px;font-size:10px;font-weight:normal;text-rendering:geometricPrecision;color:#111;transform:scaleX(0.7903);-webkit-text-stroke:0.1px #111">100 Hz - AAF</div>
<div class="a" style="left:30px;top:371.01px;width:958.5px;height:15.37px;background:#eff2f8"></div>
<div class="t" style="left:31.90px;top:375.00px;font-size:10px;font-weight:normal;text-rendering:geometricPrecision;color:#111;transform:scaleX(0.7839);-webkit-text-stroke:0.1px #111">DMS_12</div>
<div class="t" style="left:224.60px;top:375.00px;font-size:10px;font-weight:normal;text-rendering:geometricPrecision;color:#111;transform:scaleX(0.8721);-webkit-text-stroke:0.1px #111">[01] IN04</div>
<div class="t" style="left:380.30px;top:375.00px;font-size:10px;font-weight:normal;text-rendering:geometricPrecision;color:#111;transform:scaleX(0.8413);-webkit-text-stroke:0.1px #111">aktiv</div>
<div class="t" style="left:517.70px;top:375.00px;font-size:10px;font-weight:normal;text-rendering:geometricPrecision;color:#111;transform:scaleX(0.8052);-webkit-text-stroke:0.1px #111">Vollbrücke - linear</div>
<div class="t" style="left:617.50px;top:375.00px;font-size:10px;font-weight:normal;text-rendering:geometricPrecision;color:#111;transform:scaleX(0.8234);-webkit-text-stroke:0.1px #111">±1000 "mV/V"</div>
<div class="t" style="left:724.00px;top:375.00px;font-size:10px;font-weight:normal;text-rendering:geometricPrecision;color:#111;transform:scaleX(0.7903);-webkit-text-stroke:0.1px #111">100 Hz - AAF</div>
<div class="a" style="left:30px;top:386.38px;width:958.5px;height:15.37px;background:#f9f9f1"></div>
<div class="t" style="left:31.90px;top:390.00px;font-size:10px;font-weight:normal;text-rendering:geometricPrecision;color:#111;transform:scaleX(0.7839);-webkit-text-stroke:0.1px #111">DMS_13</div>
<div class="t" style="left:224.60px;top:390.00px;font-size:10px;font-weight:normal;text-rendering:geometricPrecision;color:#111;transform:scaleX(0.8721);-webkit-text-stroke:0.1px #111">[01] IN05</div>
<div class="t" style="left:380.30px;top:390.00px;font-size:10px;font-weight:normal;text-rendering:geometricPrecision;color:#111;transform:scaleX(0.8413);-webkit-text-stroke:0.1px #111">aktiv</div>
<div class="t" style="left:517.70px;top:390.00px;font-size:10px;font-weight:normal;text-rendering:geometricPrecision;color:#111;transform:scaleX(0.8052);-webkit-text-stroke:0.1px #111">Vollbrücke - linear</div>
<div class="t" style="left:617.50px;top:390.00px;font-size:10px;font-weight:normal;text-rendering:geometricPrecision;color:#111;transform:scaleX(0.8234);-webkit-text-stroke:0.1px #111">±1000 "mV/V"</div>
<div class="t" style="left:724.00px;top:390.00px;font-size:10px;font-weight:normal;text-rendering:geometricPrecision;color:#111;transform:scaleX(0.7903);-webkit-text-stroke:0.1px #111">100 Hz - AAF</div>
<div class="a" style="left:30px;top:401.75px;width:958.5px;height:15.37px;background:#eff2f8"></div>
<div class="t" style="left:31.90px;top:406.00px;font-size:10px;font-weight:normal;text-rendering:geometricPrecision;color:#111;transform:scaleX(0.7839);-webkit-text-stroke:0.1px #111">DMS_14</div>
<div class="t" style="left:224.60px;top:406.00px;font-size:10px;font-weight:normal;text-rendering:geometricPrecision;color:#111;transform:scaleX(0.8721);-webkit-text-stroke:0.1px #111">[01] IN05</div>
<div class="t" style="left:380.30px;top:406.00px;font-size:10px;font-weight:normal;text-rendering:geometricPrecision;color:#111;transform:scaleX(0.8413);-webkit-text-stroke:0.1px #111">aktiv</div>
<div class="t" style="left:517.70px;top:406.00px;font-size:10px;font-weight:normal;text-rendering:geometricPrecision;color:#111;transform:scaleX(0.8052);-webkit-text-stroke:0.1px #111">Vollbrücke - linear</div>
<div class="t" style="left:617.50px;top:406.00px;font-size:10px;font-weight:normal;text-rendering:geometricPrecision;color:#111;transform:scaleX(0.8234);-webkit-text-stroke:0.1px #111">±1000 "mV/V"</div>
<div class="t" style="left:724.00px;top:406.00px;font-size:10px;font-weight:normal;text-rendering:geometricPrecision;color:#111;transform:scaleX(0.7903);-webkit-text-stroke:0.1px #111">100 Hz - AAF</div>
<div class="a" style="left:30px;top:417.12px;width:958.5px;height:15.37px;background:#f9f9f1"></div>
<div class="t" style="left:31.90px;top:421.00px;font-size:10px;font-weight:normal;text-rendering:geometricPrecision;color:#111;transform:scaleX(0.7839);-webkit-text-stroke:0.1px #111">DMS_15</div>
<div class="t" style="left:224.60px;top:421.00px;font-size:10px;font-weight:normal;text-rendering:geometricPrecision;color:#111;transform:scaleX(0.8721);-webkit-text-stroke:0.1px #111">[01] IN06</div>
<div class="t" style="left:380.30px;top:421.00px;font-size:10px;font-weight:normal;text-rendering:geometricPrecision;color:#111;transform:scaleX(0.8413);-webkit-text-stroke:0.1px #111">aktiv</div>
<div class="t" style="left:517.70px;top:421.00px;font-size:10px;font-weight:normal;text-rendering:geometricPrecision;color:#111;transform:scaleX(0.8052);-webkit-text-stroke:0.1px #111">Vollbrücke - linear</div>
<div class="t" style="left:617.50px;top:421.00px;font-size:10px;font-weight:normal;text-rendering:geometricPrecision;color:#111;transform:scaleX(0.8234);-webkit-text-stroke:0.1px #111">±1000 "mV/V"</div>
<div class="t" style="left:724.00px;top:421.00px;font-size:10px;font-weight:normal;text-rendering:geometricPrecision;color:#111;transform:scaleX(0.7903);-webkit-text-stroke:0.1px #111">100 Hz - AAF</div>
<div class="a" style="left:30px;top:432.49px;width:958.5px;height:3.81px;background:#eff2f8"></div>
<div class="a" style="left:956px;top:204.14px;width:10.3px;height:10.3px;border:1px solid #adb0b6;background:linear-gradient(135deg,#e2e3e5,#f4f4f5);border-radius:1px;box-shadow:inset 0 0 0 1px #f7f7f8"></div>
<svg class="a" style="left:957px;top:204.94px" width="9" height="9"><path d="M2.2 4.4L4 7L7.4 1.6" stroke="#222" stroke-width="1.5" fill="none"/></svg>
<div class="a" style="left:956px;top:219.51px;width:10.3px;height:10.3px;border:1px solid #adb0b6;background:linear-gradient(135deg,#e2e3e5,#f4f4f5);border-radius:1px;box-shadow:inset 0 0 0 1px #f7f7f8"></div>
<div class="a" style="left:956px;top:234.88px;width:10.3px;height:10.3px;border:1px solid #adb0b6;background:linear-gradient(135deg,#e2e3e5,#f4f4f5);border-radius:1px;box-shadow:inset 0 0 0 1px #f7f7f8"></div>
<div class="a" style="left:956px;top:250.25px;width:10.3px;height:10.3px;border:1px solid #adb0b6;background:linear-gradient(135deg,#e2e3e5,#f4f4f5);border-radius:1px;box-shadow:inset 0 0 0 1px #f7f7f8"></div>
<svg class="a" style="left:957px;top:251.05px" width="9" height="9"><path d="M2.2 4.4L4 7L7.4 1.6" stroke="#222" stroke-width="1.5" fill="none"/></svg>
<div class="a" style="left:956px;top:265.62px;width:10.3px;height:10.3px;border:1px solid #adb0b6;background:linear-gradient(135deg,#e2e3e5,#f4f4f5);border-radius:1px;box-shadow:inset 0 0 0 1px #f7f7f8"></div>
<div class="a" style="left:956px;top:280.99px;width:10.3px;height:10.3px;border:1px solid #adb0b6;background:linear-gradient(135deg,#e2e3e5,#f4f4f5);border-radius:1px;box-shadow:inset 0 0 0 1px #f7f7f8"></div>
<div class="a" style="left:956px;top:296.36px;width:10.3px;height:10.3px;border:1px solid #adb0b6;background:linear-gradient(135deg,#e2e3e5,#f4f4f5);border-radius:1px;box-shadow:inset 0 0 0 1px #f7f7f8"></div>
<div class="a" style="left:956px;top:311.73px;width:10.3px;height:10.3px;border:1px solid #adb0b6;background:linear-gradient(135deg,#e2e3e5,#f4f4f5);border-radius:1px;box-shadow:inset 0 0 0 1px #f7f7f8"></div>
<div class="a" style="left:956px;top:327.10px;width:10.3px;height:10.3px;border:1px solid #adb0b6;background:linear-gradient(135deg,#e2e3e5,#f4f4f5);border-radius:1px;box-shadow:inset 0 0 0 1px #f7f7f8"></div>
<div class="a" style="left:956px;top:342.47px;width:10.3px;height:10.3px;border:1px solid #adb0b6;background:linear-gradient(135deg,#e2e3e5,#f4f4f5);border-radius:1px;box-shadow:inset 0 0 0 1px #f7f7f8"></div>
<div class="a" style="left:956px;top:357.84px;width:10.3px;height:10.3px;border:1px solid #adb0b6;background:linear-gradient(135deg,#e2e3e5,#f4f4f5);border-radius:1px;box-shadow:inset 0 0 0 1px #f7f7f8"></div>
<div class="a" style="left:956px;top:373.21px;width:10.3px;height:10.3px;border:1px solid #adb0b6;background:linear-gradient(135deg,#e2e3e5,#f4f4f5);border-radius:1px;box-shadow:inset 0 0 0 1px #f7f7f8"></div>
<div class="a" style="left:956px;top:388.58px;width:10.3px;height:10.3px;border:1px solid #adb0b6;background:linear-gradient(135deg,#e2e3e5,#f4f4f5);border-radius:1px;box-shadow:inset 0 0 0 1px #f7f7f8"></div>
<div class="a" style="left:956px;top:403.95px;width:10.3px;height:10.3px;border:1px solid #adb0b6;background:linear-gradient(135deg,#e2e3e5,#f4f4f5);border-radius:1px;box-shadow:inset 0 0 0 1px #f7f7f8"></div>
<div class="a" style="left:956px;top:419.32px;width:10.3px;height:10.3px;border:1px solid #adb0b6;background:linear-gradient(135deg,#e2e3e5,#f4f4f5);border-radius:1px;box-shadow:inset 0 0 0 1px #f7f7f8"></div>
<div class="a" style="left:956px;top:434.69px;width:10.3px;height:10.3px;border:1px solid #adb0b6;background:linear-gradient(135deg,#e2e3e5,#f4f4f5);border-radius:1px;box-shadow:inset 0 0 0 1px #f7f7f8"></div>
<div class="a" style="left:1px;top:436.3px;width:1000px;height:12.3px;background:#fdfdfd"></div>
<div class="a" style="left:221px;top:201.8px;width:1.3px;height:234.5px;background:#868b94"></div>
<div class="a" style="left:988.3px;top:153.8px;width:12.4px;height:282.5px;background:linear-gradient(90deg,#f0f0f1,#fbfbfc)"></div>
<svg class="a" style="left:990px;top:158.6px" width="9" height="6"><path d="M0.6 5.4L4.5 1L8.4 5.4Z" fill="#2e2e2e"/></svg>
<svg class="a" style="left:990px;top:425.8px" width="9" height="6"><path d="M0.6 0.6L4.5 5L8.4 0.6Z" fill="#3a3a3a"/></svg>
<div class="a" style="left:988.6px;top:168.8px;width:11.2px;height:178.8px;border:1px solid #c3c6cb;border-radius:2px;background:linear-gradient(90deg,#e5e6e8,#f5f5f6 45%,#dcdde0)"></div>
<div class="a" style="left:992px;top:254.5px;width:5px;height:6px;background:repeating-linear-gradient(#8a8d93 0 1px,#d8d9dc 1px 2px)"></div>
<div class="a" style="left:1.5px;top:436.3px;width:987px;height:12.5px;background:linear-gradient(#f5f5f6,#fdfdfd)"></div>
<svg class="a" style="left:5.5px;top:438.5px" width="6" height="9"><path d="M5.4 0.6L1 4.5L5.4 8.4Z" fill="#555"/></svg>
<svg class="a" style="left:979.5px;top:438.5px" width="6" height="9"><path d="M0.6 0.6L5 4.5L0.6 8.4Z" fill="#2e2e2e"/></svg>
<div class="a" style="left:15px;top:436.2px;width:862.5px;height:11.5px;border:1px solid #c3c6cb;border-radius:2px;background:linear-gradient(#ebebed,#f5f5f6 45%,#e1e2e5)"></div>
<div class="a" style="left:443px;top:439.6px;width:6px;height:5.5px;background:repeating-linear-gradient(90deg,#8a8d93 0 1px,#d8d9dc 1px 2px)"></div>
<div class="a" style="left:988px;top:436.5px;width:12.7px;height:12px;background:#e3e6eb"></div>
<div class="a" style="left:495px;top:451.4px;z-index:1;width:12px;height:1.4px;background:repeating-linear-gradient(90deg,#8c8c8c 0 1.6px,transparent 1.6px 3px)"></div>
<div class="a" style="left:0.5px;top:486.6px;width:998.6px;height:129.8px;background:#fff;border:1px solid #abb2bc;border-top:none"></div>
<div class="a" style="left:1002.4px;top:153px;width:1.2px;height:468px;background:#c9ced6"></div>
<div class="a" style="left:3.3px;top:454px;width:94.7px;height:33px;background:#fff;border:1px solid #b4b9c2;border-bottom:none"></div>
<div class="t" style="left:36.70px;top:467.00px;font-size:10px;font-weight:normal;text-rendering:geometricPrecision;color:#2e2e2e;transform:scaleX(0.8078);-webkit-text-stroke:0.1px #2e2e2e">Kanaldefinition</div>
<div class="a" style="left:97.4px;top:456.2px;width:82.19999999999999px;height:30.5px;background:linear-gradient(#e3e5e8,#dcdfe3);border:1px solid #b9bec6;border-bottom:none"></div>
<div class="t" style="left:129.20px;top:467.00px;font-size:10px;font-weight:normal;text-rendering:geometricPrecision;color:#2e2e2e;transform:scaleX(0.7940);-webkit-text-stroke:0.1px #2e2e2e">Messmodus</div>
<div class="a" style="left:179px;top:456.2px;width:113.6px;height:30.5px;background:linear-gradient(#e3e5e8,#dcdfe3);border:1px solid #b9bec6;border-bottom:none"></div>
<div class="t" style="left:211.00px;top:467.00px;font-size:10px;font-weight:normal;text-rendering:geometricPrecision;color:#2e2e2e;transform:scaleX(0.8031);-webkit-text-stroke:0.1px #2e2e2e">Bereich &amp; Skalierung</div>
<div class="a" style="left:292px;top:456.2px;width:106.9px;height:30.5px;background:linear-gradient(#e3e5e8,#dcdfe3);border:1px solid #b9bec6;border-bottom:none"></div>
<div class="t" style="left:325.40px;top:467.00px;font-size:10px;font-weight:normal;text-rendering:geometricPrecision;color:#2e2e2e;transform:scaleX(0.8304);-webkit-text-stroke:0.1px #2e2e2e">Abtastung &amp; Filter</div>
<div class="a" style="left:398.3px;top:456.2px;width:92.1px;height:30.5px;background:linear-gradient(#e3e5e8,#dcdfe3);border:1px solid #b9bec6;border-bottom:none"></div>
<div class="t" style="left:431.00px;top:467.00px;font-size:10px;font-weight:normal;text-rendering:geometricPrecision;color:#2e2e2e;transform:scaleX(0.8582);-webkit-text-stroke:0.1px #2e2e2e">Datentransfer</div>
<svg class="a" style="left:9.9px;top:457.9px" width="25" height="25" viewBox="0 0 25 25"><rect x="0.7" y="0.7" width="23.6" height="23.6" rx="3.2" fill="url(#bluebg)" stroke="#0a3378" stroke-width="1.1"/><path d="M1.8 1.8H23.2V11Q14 16 1.8 15.6Z" fill="url(#gloss)"/><path d="M2.2 15.5V4.5Q2.2 2.2 4.5 2.2H20.5" stroke="#f4f5fb" stroke-width="0.7" fill="none" opacity="0.8"/><path d="M4.6 3.9V7.3H21.1M4.6 11.2V14.3H21.1M4.6 17.5V20.9H21.1" stroke="#fff" fill="none" stroke-linecap="round" stroke-linejoin="round" stroke-width="1.3"/></svg><svg class="a" style="left:103.2px;top:458.9px" width="25" height="25" viewBox="0 0 25 25"><rect x="0.7" y="0.7" width="23.6" height="23.6" rx="3.2" fill="url(#bluebg)" stroke="#0a3378" stroke-width="1.1"/><path d="M1.8 1.8H23.2V9Q14 17.5 1.8 16.6Z" fill="url(#gloss)"/><path d="M2.2 15.5V4.5Q2.2 2.2 4.5 2.2H20.5" stroke="#f4f5fb" stroke-width="0.7" fill="none" opacity="0.8"/><path d="M7.6 4.2L18.3 12.6L7.6 21Z" fill="#fff"/></svg><svg class="a" style="left:184.7px;top:458.9px" width="25" height="25" viewBox="0 0 25 25"><rect x="0.7" y="0.7" width="23.6" height="23.6" rx="3.2" fill="url(#bluebg)" stroke="#0a3378" stroke-width="1.1"/><path d="M1.8 1.8H23.2V9Q14 17.5 1.8 16.6Z" fill="url(#gloss)"/><path d="M2.2 15.5V4.5Q2.2 2.2 4.5 2.2H20.5" stroke="#f4f5fb" stroke-width="0.7" fill="none" opacity="0.8"/><path d="M3.4 3V20.8H21" stroke="#fff" fill="none" stroke-linecap="round" stroke-linejoin="round" stroke-width="1.3"/><path d="M8.6 15.8L19.2 5.4" stroke="#fff" fill="none" stroke-linecap="round" stroke-linejoin="round" stroke-width="1.4"/><path d="M6.8 17.5L8 12.8L11.4 16.2Z M20.9 3.7L19.7 8.4L16.3 5Z" fill="#fff"/></svg><svg class="a" style="left:298.4px;top:458.9px" width="25" height="25" viewBox="0 0 25 25"><rect x="0.7" y="0.7" width="23.6" height="23.6" rx="3.2" fill="url(#bluebg)" stroke="#0a3378" stroke-width="1.1"/><path d="M1.8 1.8H23.2V9Q14 17.5 1.8 16.6Z" fill="url(#gloss)"/><path d="M2.2 15.5V4.5Q2.2 2.2 4.5 2.2H20.5" stroke="#f4f5fb" stroke-width="0.7" fill="none" opacity="0.8"/><path d="M3.6 3V21H21.1" stroke="#fff" fill="none" stroke-linecap="round" stroke-linejoin="round" stroke-width="1.3"/><path d="M6.8 6.6H15.3L20.4 16.4" stroke="#fff" fill="none" stroke-linecap="round" stroke-linejoin="round" stroke-width="1.3"/></svg><svg class="a" style="left:404.9px;top:458.9px" width="25" height="25" viewBox="0 0 25 25"><rect x="0.7" y="0.7" width="23.6" height="23.6" rx="3.2" fill="url(#bluebg)" stroke="#0a3378" stroke-width="1.1"/><path d="M1.8 1.8H23.2V9Q14 17.5 1.8 16.6Z" fill="url(#gloss)"/><path d="M2.2 15.5V4.5Q2.2 2.2 4.5 2.2H20.5" stroke="#f4f5fb" stroke-width="0.7" fill="none" opacity="0.8"/><path d="M3 5.6H19" stroke="#fff" stroke-width="2.4"/><path d="M17.5 2.8L21.6 5.6L17.5 8.4Z" fill="#fff"/><ellipse cx="12.4" cy="12.3" rx="9.5" ry="2.4" stroke="#fff" fill="none" stroke-linecap="round" stroke-linejoin="round" stroke-width="0.9" fill="#5a64ae"/><path d="M2.9 12.5Q2.5 14.8 12.4 15.4T21.9 12.5M2.9 15.2Q2.5 17.8 12.4 18.2T21.9 15.2M2.9 18Q2.5 20.6 12.4 21T21.9 18" stroke="#fff" fill="none" stroke-linecap="round" stroke-linejoin="round" stroke-width="0.9"/></svg>
<div class="a" style="left:1.3px;top:486.6px;width:997px;height:18px;background:#d3d8e5"></div>
<div class="t" style="left:10.20px;top:492.00px;font-size:10px;font-weight:normal;text-rendering:geometricPrecision;color:#2e2e2e;transform:scaleX(0.7965);-webkit-text-stroke:0.1px #2e2e2e">Kanaltyp</div>
<div class="t" style="left:117.00px;top:492.00px;font-size:10px;font-weight:normal;text-rendering:geometricPrecision;color:#2e2e2e;transform:scaleX(0.7951);-webkit-text-stroke:0.1px #2e2e2e">Analoge Eingänge</div>
<div class="t" style="left:305.90px;top:492.00px;font-size:10px;font-weight:normal;text-rendering:geometricPrecision;color:#2e2e2e;transform:scaleX(0.8328);-webkit-text-stroke:0.1px #2e2e2e">Brücken-, Strom- und Spannungsverstärker und Temperaturmessung "UNI2-8"</div>
<svg class="a" style="left:94.3px;top:491.2px" width="18.5" height="10.5" viewBox="0 0 18.5 10.5"><circle cx="2.6" cy="5.2" r="1.7" fill="#e8e8e8" stroke="#111" stroke-width="1.1"/><path d="M4.3 5.2H5.6" stroke="#111" stroke-width="1"/><path d="M5.6 9.4V6H8V9.4Z M8 9.4V1H10.6V9.4Z M10.6 9.4V3.2H13.2V9.4Z M13.2 9.4V6.4H16.6V9.4Z" fill="#f1e80e" stroke="#111" stroke-width="1.1" stroke-linejoin="round"/></svg>
<div class="t" style="left:10.20px;top:518.00px;font-size:10px;font-weight:normal;text-rendering:geometricPrecision;color:#2e2e2e;transform:scaleX(0.7719);-webkit-text-stroke:0.1px #2e2e2e">Name</div>
<div class="t" style="left:10.20px;top:537.00px;font-size:10px;font-weight:normal;text-rendering:geometricPrecision;color:#2e2e2e;transform:scaleX(0.7971);-webkit-text-stroke:0.1px #2e2e2e">Kommentar</div>
<div class="t" style="left:10.20px;top:564.00px;font-size:10px;font-weight:normal;text-rendering:geometricPrecision;color:#2e2e2e;transform:scaleX(0.8392);-webkit-text-stroke:0.1px #2e2e2e">Status</div>
<div class="t" style="left:11.00px;top:593.00px;font-size:10.5px;font-weight:normal;text-rendering:geometricPrecision;color:#3a3a5a;transform:scaleX(0.7853);-webkit-text-stroke:0.2px #3a3a5a">TEDS</div>
<div class="t" style="left:185.60px;top:564.00px;font-size:10px;font-weight:normal;text-rendering:geometricPrecision;color:#2e2e2e;transform:scaleX(0.8230);-webkit-text-stroke:0.1px #2e2e2e">Farbe</div>
<div class="a" style="left:87.8px;top:514.2px;width:255.0px;height:15.599999999999909px;border:1px solid #a9aeb6;background:#fff"></div><div class="a" style="left:329.5px;top:515.2px;width:12.3px;height:13.599999999999909px;background:linear-gradient(#f6f6f7,#e4e5e8);border-left:1px solid #c6c9ce"></div><svg class="a" style="left:333.0px;top:520.4px" width="6" height="4"><path d="M0.3 0.5L3 3.5L5.7 0.5Z" fill="#333"/></svg>
<div class="t" style="left:89.30px;top:518.00px;font-size:10px;font-weight:normal;text-rendering:geometricPrecision;color:#111;transform:scaleX(0.7944);-webkit-text-stroke:0.1px #111">DMS_7</div>
<div class="a" style="left:87.8px;top:533.3px;width:901.6px;height:14.300000000000068px;border:1px solid #a9aeb6;background:#fff"></div><div class="a" style="left:976.1px;top:534.3px;width:12.3px;height:12.300000000000068px;background:linear-gradient(#f6f6f7,#e4e5e8);border-left:1px solid #c6c9ce"></div><svg class="a" style="left:979.6px;top:538.85px" width="6" height="4"><path d="M0.3 0.5L3 3.5L5.7 0.5Z" fill="#333"/></svg>
<div class="a" style="left:87.8px;top:560.3px;width:79.7px;height:15.300000000000068px;border:1px solid #a9aeb6;background:#fff"></div><div class="a" style="left:154.2px;top:561.3px;width:12.3px;height:13.300000000000068px;background:linear-gradient(#f6f6f7,#e4e5e8);border-left:1px solid #c6c9ce"></div><svg class="a" style="left:157.7px;top:566.35px" width="6" height="4"><path d="M0.3 0.5L3 3.5L5.7 0.5Z" fill="#333"/></svg>
<div class="t" style="left:89.30px;top:564.00px;font-size:10px;font-weight:normal;text-rendering:geometricPrecision;color:#111;transform:scaleX(0.8754);-webkit-text-stroke:0.1px #111">aktiv</div>
<div class="a" style="left:263.4px;top:560.5px;width:79.40000000000003px;height:15.0px;border:1px solid #a9aeb6;background:#fff"></div><div class="a" style="left:329.5px;top:561.5px;width:12.3px;height:13.0px;background:linear-gradient(#f6f6f7,#e4e5e8);border-left:1px solid #c6c9ce"></div><svg class="a" style="left:333.0px;top:566.4px" width="6" height="4"><path d="M0.3 0.5L3 3.5L5.7 0.5Z" fill="#333"/></svg>
<div class="a" style="left:266.7px;top:564px;width:17.2px;height:8px;border:1px solid #333;background:#fff"></div>
<div class="t" style="left:286.80px;top:564.00px;font-size:10px;font-weight:normal;text-rendering:geometricPrecision;color:#111;transform:scaleX(0.8424);-webkit-text-stroke:0.1px #111">auto</div>
<div class="a" style="left:87.8px;top:588.5px;width:255.0px;height:14.899999999999977px;border:1px solid #a9aeb6;background:linear-gradient(#f8f8f9,#e9eaec)"></div><div class="a" style="left:329.5px;top:589.5px;width:12.3px;height:12.899999999999977px;background:linear-gradient(#f6f6f7,#e4e5e8);border-left:1px solid #c6c9ce"></div><svg class="a" style="left:333.0px;top:594.35px" width="6" height="4"><path d="M0.3 0.5L3 3.5L5.7 0.5Z" fill="#333"/></svg>
<div class="t" style="left:145.90px;top:592.00px;font-size:10px;font-weight:normal;text-rendering:geometricPrecision;color:#111;transform:scaleX(0.8240);-webkit-text-stroke:0.1px #111">Information aus dem Sensor lesen</div>
<div class="a" style="left:4.7px;top:625.8px;width:52.3px;height:15px;background:linear-gradient(#f9f9f9,#eeeeee);border:1px solid #c4c4c4;border-bottom:none"></div>
<div class="t" style="left:20.00px;top:629.00px;font-size:10.5px;font-weight:normal;text-rendering:geometricPrecision;color:#222;transform:scaleX(0.8686);-webkit-text-stroke:0.1px #222">Logbuch</div>
<svg class="a" style="left:5.6px;top:628px" width="10.5" height="11" viewBox="0 0 10.5 11"><circle cx="4" cy="3.6" r="2.8" fill="#bfe4f6" stroke="#7a8c9c" stroke-width="0.9"/><path d="M2.6 6.5L1.2 9.2L6.2 10.2L7.4 7" stroke="#6a6a9a" stroke-width="1" fill="none"/><circle cx="8.8" cy="2.4" r="1" fill="#8a8ac0"/></svg>
<div class="a" style="left:0;top:640.6px;width:1024px;height:18.4px;background:linear-gradient(#e8e8e8,#dedede)"></div>
<div class="t" style="left:21.90px;top:646.00px;font-size:10.5px;font-weight:normal;text-rendering:geometricPrecision;color:#575757;transform:scaleX(0.8126);-webkit-text-stroke:0.05px #575757">Stephan Schaefer@BERLIN</div>
<div class="a" style="left:136.3px;top:643.5px;width:1px;height:14px;background:#b4b4b4"></div>
<svg class="a" style="left:8px;top:644.3px" width="11.5" height="12.5" viewBox="0 0 11.5 12.5"><circle cx="4.8" cy="3.6" r="2.8" fill="#f2b070" stroke="#c88a30" stroke-width="0.5"/><path d="M2.2 2.8Q4.5 0 7.5 2.6" stroke="#c89a20" stroke-width="1.2" fill="none"/><path d="M0.5 12V9.2Q0.8 6.8 4.8 6.8Q8 6.8 8.6 8.8V12Z" fill="#e4692a"/><path d="M5.6 9L7.6 11.2L11 6.4" stroke="#1a50c8" stroke-width="1.6" fill="none"/></svg>
<div class="a" style="left:1002px;top:641px;width:22px;height:18px;background:linear-gradient(#dadada,#c8c8c8);border-left:1px solid #e6e6e6"></div>
<svg class="a" style="left:1012px;top:647px" width="12" height="12"><g fill="#555"><rect x="9.8" y="9.6" width="1.5" height="1.5"/><rect x="9.8" y="6.3999999999999995" width="1.5" height="1.5"/><rect x="9.8" y="3.1999999999999993" width="1.5" height="1.5"/><rect x="6.700000000000001" y="9.6" width="1.5" height="1.5"/><rect x="6.700000000000001" y="6.3999999999999995" width="1.5" height="1.5"/><rect x="3.6000000000000005" y="9.6" width="1.5" height="1.5"/></g></svg>
</body></html>
